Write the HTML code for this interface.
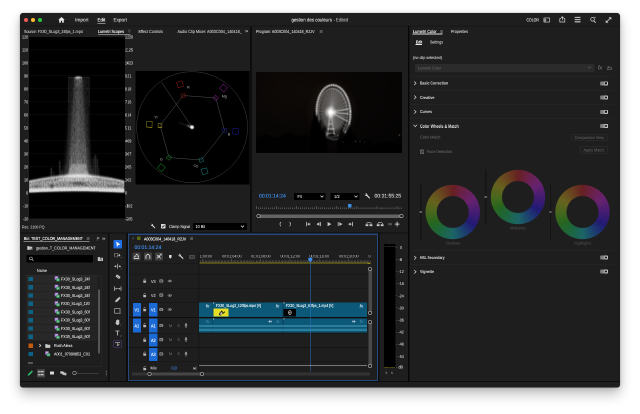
<!DOCTYPE html><html lang="en"><head><meta charset="utf-8"><title>gestion des couleurs - Edited</title><style>
html,body{margin:0;padding:0;background:#fff;}
body{width:640px;height:414px;position:relative;overflow:hidden;font-family:"Liberation Sans",sans-serif;}
div,span.t,svg{position:absolute;}
#stage{left:0;top:0;width:1280px;height:828px;transform:scale(.5);transform-origin:0 0;will-change:transform;background:#fff;overflow:hidden;}
.t{text-shadow:0 0 .5px currentColor;text-rendering:geometricPrecision;white-space:nowrap;line-height:1.15;transform-origin:0 50%;display:block;}
#win{left:40px;top:26px;width:1200px;height:749.4px;background:#1e1e1e;border-radius:6px;box-shadow:0 14px 26px rgba(0,0,0,.24),0 3px 12px rgba(0,0,0,.14),0 0 2px rgba(0,0,0,.4);overflow:hidden;}
</style></head><body><div id="stage">
<div id="win">
<div style="left:0px;top:25.2px;width:1200px;height:2px;background:#151515;"></div>
<div style="left:460.4px;top:27.0px;width:3.4px;height:414px;background:#0d0d0d;"></div>
<div style="left:775.8px;top:27.0px;width:2.8px;height:709.0px;background:#070707;"></div>
<div style="left:0px;top:438.8px;width:776px;height:2.4px;background:#0d0d0d;"></div>
<div style="left:176px;top:440px;width:2.8px;height:297.0px;background:#0d0d0d;"></div>
<div style="left:212.4px;top:440px;width:3.2px;height:297.0px;background:#0d0d0d;"></div>
<div style="left:716.4px;top:440px;width:2.6px;height:297.0px;background:#0d0d0d;"></div>
<div style="left:0px;top:736px;width:1200px;height:14px;background:#1e1e1e;"></div>
<div style="left:0px;top:736px;width:1200px;height:2px;background:#0c0c0c;"></div>
<div style="left:8.1px;top:9.5px;width:8.2px;height:8.2px;background:#ee5b54;border-radius:50%;"></div>
<div style="left:22.1px;top:9.5px;width:8.2px;height:8.2px;background:#fdbc2e;border-radius:50%;"></div>
<div style="left:36.1px;top:9.5px;width:8.2px;height:8.2px;background:#2bc640;border-radius:50%;"></div>
<svg style="left:75.6px;top:7.2px;" width="14" height="13.2" viewBox="0 0 7 6.6"><path d="M3.5 .5 L.3 3.4 H1.2 V6.1 H2.9 V4.2 H4.1 V6.1 H5.8 V3.4 H6.7 Z" fill="#e6e6e6"/></svg>
<span class="t" style="left:110.4px;top:8.66px;font-size:10.2px;color:#c9c9c9;transform:scaleX(0.942);">Import</span>
<span class="t" style="left:155.0px;top:8.66px;font-size:10.2px;color:#f0f0f0;transform:scaleX(0.888);">Edit</span>
<div style="left:155.0px;top:19.8px;width:15.6px;height:1.4px;background:#e8e8e8;"></div>
<span class="t" style="left:186.6px;top:8.66px;font-size:10.2px;color:#c9c9c9;transform:scaleX(0.910);">Export</span>
<span class="t" style="left:542.8px;top:8.66px;font-size:10.2px;color:#dadada;transform:scaleX(0.865);">gestion des couleurs</span>
<span class="t" style="left:627.2px;top:8.66px;font-size:10.2px;color:#a4a4a4;transform:scaleX(0.820);">- Edited</span>
<span class="t" style="left:1013.2px;top:9.42px;font-size:9.2px;color:#d6d6d6;transform:scaleX(0.759);">COLOR</span>
<svg style="left:1047.2px;top:9.2px;" width="13.6" height="10.4" viewBox="0 0 6.8 5.2"><rect x=".4" y=".4" width="5.8" height="4.2" rx=".3" fill="none" stroke="#cfcfcf" stroke-width=".65"/><rect x=".7" y="1.3" width="1.9" height="3" fill="#9a9a9a"/></svg>
<svg style="left:1077.6px;top:6.4px;" width="13.2" height="13.2" viewBox="0 0 6.6 6.6"><path d="M2 2.6 H.8 V6 H5.8 V2.6 H4.6" fill="none" stroke="#cfcfcf" stroke-width=".7"/><path d="M3.3 4.3 V.8 M2.1 1.9 L3.3 .6 L4.5 1.9" fill="none" stroke="#cfcfcf" stroke-width=".7"/></svg>
<svg style="left:1108.8px;top:7.2px;" width="12.8" height="12.4" viewBox="0 0 6.4 6.2"><path d="M.2 .9 H6 M.2 3.1 H6 M.2 5.3 H6" stroke="#cfcfcf" stroke-width="1.05"/></svg>
<svg style="left:1139.6px;top:7.2px;" width="12.8" height="13.6" viewBox="0 0 6.4 6.8"><circle cx="2.5" cy="2.8" r="1.8" fill="none" stroke="#cfcfcf" stroke-width=".7"/><path d="M3.8 4.2 L5.6 6.3" stroke="#cfcfcf" stroke-width=".85"/><path d="M5 .2 V1.6 M4.3 .9 H5.7" stroke="#cfcfcf" stroke-width=".45"/></svg>
<svg style="left:1169.6px;top:6.8px;" width="14" height="14" viewBox="0 0 7 7"><path d="M1.2 5.8 L5.8 1.2" stroke="#cfcfcf" stroke-width=".8"/><path d="M3.6 .7 H6.3 V3.4 Z M.7 3.6 V6.3 H3.4 Z" fill="#cfcfcf"/></svg>
<span class="t" style="left:8px;top:32.05px;font-size:8.8px;color:#bdbdbd;transform:scaleX(0.841);">Source: FX30_SLog3_24fps_1.mp4</span>
<span class="t" style="left:156px;top:32.05px;font-size:8.8px;color:#f2f2f2;transform:scaleX(0.851);">Lumetri Scopes</span>
<div style="left:155.6px;top:41.8px;width:65.6px;height:1.2px;background:#e0e0e0;"></div>
<svg style="left:215.4px;top:33.2px;" width="6.8" height="6" viewBox="0 0 3.4 3"><path d="M.2 .5H3M.2 1.5H3M.2 2.5H3" stroke="#6a6a6a" stroke-width=".45"/></svg>
<span class="t" style="left:237.4px;top:32.05px;font-size:8.8px;color:#bdbdbd;transform:scaleX(0.848);">Effect Controls</span>
<span class="t" style="left:315.4px;top:32.05px;font-size:8.8px;color:#bdbdbd;transform:scaleX(0.863);">Audio Clip Mixer: A003C004_140418_</span>
<span class="t" style="left:449.6px;top:31.17px;font-size:10px;color:#cfcfcf;transform:scaleX(1.151);">»</span>
<div style="left:18.4px;top:48.2px;width:191.2px;height:363.2px;background:#000;"></div>
<span class="t" style="left:3.6px;top:42.73px;font-size:9.0px;color:#bcbcbc;transform:scaleX(0.825);">120</span>
<span class="t" style="left:210.4px;top:42.73px;font-size:9.0px;color:#bcbcbc;transform:scaleX(0.799);">1228</span>
<span class="t" style="left:3.6px;top:68.73px;font-size:9.0px;color:#bcbcbc;transform:scaleX(0.864);">110</span>
<span class="t" style="left:210.4px;top:68.73px;font-size:9.0px;color:#bcbcbc;transform:scaleX(0.826);">1125</span>
<span class="t" style="left:3.6px;top:94.73px;font-size:9.0px;color:#bcbcbc;transform:scaleX(0.825);">100</span>
<span class="t" style="left:210.4px;top:94.73px;font-size:9.0px;color:#bcbcbc;transform:scaleX(0.799);">1023</span>
<span class="t" style="left:7.6px;top:120.73px;font-size:9.0px;color:#bcbcbc;transform:scaleX(0.839);">90</span>
<span class="t" style="left:210.4px;top:120.73px;font-size:9.0px;color:#bcbcbc;transform:scaleX(0.838);">921</span>
<span class="t" style="left:7.6px;top:146.73px;font-size:9.0px;color:#bcbcbc;transform:scaleX(0.839);">80</span>
<span class="t" style="left:210.4px;top:146.73px;font-size:9.0px;color:#bcbcbc;transform:scaleX(0.838);">818</span>
<span class="t" style="left:7.6px;top:172.73px;font-size:9.0px;color:#bcbcbc;transform:scaleX(0.839);">70</span>
<span class="t" style="left:210.4px;top:172.73px;font-size:9.0px;color:#bcbcbc;transform:scaleX(0.838);">716</span>
<span class="t" style="left:7.6px;top:198.73px;font-size:9.0px;color:#bcbcbc;transform:scaleX(0.839);">60</span>
<span class="t" style="left:210.4px;top:198.73px;font-size:9.0px;color:#bcbcbc;transform:scaleX(0.838);">614</span>
<span class="t" style="left:7.6px;top:224.73px;font-size:9.0px;color:#bcbcbc;transform:scaleX(0.839);">50</span>
<span class="t" style="left:210.4px;top:224.73px;font-size:9.0px;color:#bcbcbc;transform:scaleX(0.877);">511</span>
<span class="t" style="left:7.6px;top:250.73px;font-size:9.0px;color:#bcbcbc;transform:scaleX(0.839);">40</span>
<span class="t" style="left:210.4px;top:250.73px;font-size:9.0px;color:#bcbcbc;transform:scaleX(0.838);">409</span>
<span class="t" style="left:7.6px;top:276.73px;font-size:9.0px;color:#bcbcbc;transform:scaleX(0.839);">30</span>
<span class="t" style="left:210.4px;top:276.73px;font-size:9.0px;color:#bcbcbc;transform:scaleX(0.838);">307</span>
<span class="t" style="left:7.6px;top:302.73px;font-size:9.0px;color:#bcbcbc;transform:scaleX(0.839);">20</span>
<span class="t" style="left:210.4px;top:302.73px;font-size:9.0px;color:#bcbcbc;transform:scaleX(0.838);">205</span>
<span class="t" style="left:7.6px;top:328.73px;font-size:9.0px;color:#bcbcbc;transform:scaleX(0.839);">10</span>
<span class="t" style="left:210.4px;top:328.73px;font-size:9.0px;color:#bcbcbc;transform:scaleX(0.838);">102</span>
<span class="t" style="left:11.6px;top:354.73px;font-size:9.0px;color:#bcbcbc;transform:scaleX(0.877);">0</span>
<span class="t" style="left:210.4px;top:354.73px;font-size:9.0px;color:#bcbcbc;transform:scaleX(0.877);">0</span>
<span class="t" style="left:5.6px;top:380.73px;font-size:9.0px;color:#bcbcbc;transform:scaleX(0.799);">-10</span>
<span class="t" style="left:210.4px;top:380.73px;font-size:9.0px;color:#bcbcbc;transform:scaleX(0.822);">-102</span>
<span class="t" style="left:5.6px;top:406.73px;font-size:9.0px;color:#bcbcbc;transform:scaleX(0.799);">-20</span>
<span class="t" style="left:210.4px;top:406.73px;font-size:9.0px;color:#bcbcbc;transform:scaleX(0.822);">-205</span>
<svg style="left:18.4px;top:48.2px;" width="191.2" height="363.2" viewBox="0.2 1.1 95.6 181.6"><defs>
<filter id="b1" filterUnits="userSpaceOnUse" x="0" y="0" width="96" height="184"><feGaussianBlur stdDeviation="0.8"/></filter>
<filter id="b2" filterUnits="userSpaceOnUse" x="0" y="0" width="96" height="184"><feGaussianBlur stdDeviation="1.5 1"/></filter>
<filter id="b3" filterUnits="userSpaceOnUse" x="0" y="0" width="96" height="184"><feGaussianBlur stdDeviation="0.5 0.8"/></filter>
<filter id="nz" x="0" y="0" width="100%" height="100%"><feTurbulence type="fractalNoise" baseFrequency="1.1 0.25" numOctaves="2" seed="7" result="n"/><feColorMatrix in="n" type="matrix" values="0 0 0 0 1  0 0 0 0 1  0 0 0 0 1  1.2 0 0 0 0.1" result="a"/><feComposite in="SourceGraphic" in2="a" operator="in"/></filter>
<linearGradient id="pl" x1="0" y1="0" x2="0" y2="1"><stop offset="0" stop-color="#fff" stop-opacity=".12"/><stop offset=".5" stop-color="#fff" stop-opacity=".3"/><stop offset="1" stop-color="#fff" stop-opacity=".55"/></linearGradient>
<linearGradient id="pl2" x1="0" y1="0" x2="0" y2="1"><stop offset="0" stop-color="#fff" stop-opacity=".4"/><stop offset=".1" stop-color="#fff" stop-opacity=".13"/><stop offset=".6" stop-color="#fff" stop-opacity=".2"/><stop offset="1" stop-color="#fff" stop-opacity=".34"/></linearGradient>
<filter id="nz2" x="0" y="0" width="100%" height="100%"><feTurbulence type="fractalNoise" baseFrequency="0.9 0.35" numOctaves="2" seed="3" result="n"/><feColorMatrix in="n" type="matrix" values="0 0 0 0 1  0 0 0 0 1  0 0 0 0 1  1.4 0 0 0 -0.12" result="a"/><feComposite in="SourceGraphic" in2="a" operator="in"/></filter>
</defs><path d="M0 0.90H95.5" stroke="#141414" stroke-width=".4"/><path d="M0 13.90H95.5" stroke="#141414" stroke-width=".4"/><path d="M0 26.90H95.5" stroke="#141414" stroke-width=".4"/><path d="M0 39.90H95.5" stroke="#141414" stroke-width=".4"/><path d="M0 52.90H95.5" stroke="#141414" stroke-width=".4"/><path d="M0 65.90H95.5" stroke="#141414" stroke-width=".4"/><path d="M0 78.90H95.5" stroke="#141414" stroke-width=".4"/><path d="M0 91.90H95.5" stroke="#141414" stroke-width=".4"/><path d="M0 104.90H95.5" stroke="#141414" stroke-width=".4"/><path d="M0 117.90H95.5" stroke="#141414" stroke-width=".4"/><path d="M0 130.90H95.5" stroke="#141414" stroke-width=".4"/><path d="M0 143.90H95.5" stroke="#141414" stroke-width=".4"/><path d="M0 156.90H95.5" stroke="#141414" stroke-width=".4"/><path d="M0 169.90H95.5" stroke="#141414" stroke-width=".4"/><path d="M0 182.90H95.5" stroke="#141414" stroke-width=".4"/><g filter="url(#nz)"><path d="M39.6 41.5 H60.4 L61.5 120 L64 142 L35 142 L38.5 120 Z" fill="#fff" opacity=".1" filter="url(#b3)"/></g><path d="M42.5 42 L56.5 42 L59.5 100 L62 128 L66 142 L32 142 L36 128 L38.5 100 Z" fill="url(#pl)" filter="url(#b2)" opacity=".26"/><g filter="url(#nz)"><path d="M45.6 41 L53.6 41 L56.6 100 L59.4 142 L39.6 142 L42.4 100 Z" fill="url(#pl2)" filter="url(#b3)"/></g><path d="M45.2 50 L43.91 142" stroke="#fff" stroke-opacity="0.09" stroke-width=".7" filter="url(#b3)"/><path d="M47.3 42 L46.64 142" stroke="#fff" stroke-opacity="0.15" stroke-width=".7" filter="url(#b3)"/><path d="M48.8 41 L48.59 142" stroke="#fff" stroke-opacity="0.26" stroke-width=".7" filter="url(#b3)"/><path d="M50.2 41 L50.41 142" stroke="#fff" stroke-opacity="0.24" stroke-width=".7" filter="url(#b3)"/><path d="M51.8 43 L52.49 142" stroke="#fff" stroke-opacity="0.17" stroke-width=".7" filter="url(#b3)"/><path d="M53.6 48 L54.83 142" stroke="#fff" stroke-opacity="0.12" stroke-width=".7" filter="url(#b3)"/><path d="M55.6 60 L57.43 142" stroke="#fff" stroke-opacity="0.08" stroke-width=".7" filter="url(#b3)"/><path d="M43.2 70 L41.31 142" stroke="#fff" stroke-opacity="0.07" stroke-width=".7" filter="url(#b3)"/><path d="M57.6 80 L60.03 142" stroke="#fff" stroke-opacity="0.07" stroke-width=".7" filter="url(#b3)"/><path d="M39.7 41.3V66 M60.3 41.3V70" stroke="#fff" stroke-opacity=".14" stroke-width=".5"/><path d="M39.5 41.3 H60.5" stroke="#fff" stroke-opacity=".2" stroke-width=".6"/><ellipse cx="49.5" cy="41.5" rx="3.4" ry="1" fill="#fff" opacity=".6" filter="url(#b3)"/><path d="M22.5 132V142" stroke="#fff" stroke-opacity="0.3" stroke-width=".9" filter="url(#b3)"/><path d="M31 125V142" stroke="#fff" stroke-opacity="0.28" stroke-width=".9" filter="url(#b3)"/><path d="M33 134V142" stroke="#fff" stroke-opacity="0.18" stroke-width=".9" filter="url(#b3)"/><path d="M64.5 122V142" stroke="#fff" stroke-opacity="0.18" stroke-width=".9" filter="url(#b3)"/><path d="M66.5 119V142" stroke="#fff" stroke-opacity="0.3" stroke-width=".9" filter="url(#b3)"/><path d="M68.5 123V142" stroke="#fff" stroke-opacity="0.24" stroke-width=".9" filter="url(#b3)"/><path d="M70 132V142" stroke="#fff" stroke-opacity="0.14" stroke-width=".9" filter="url(#b3)"/><path d="M25 136V142" stroke="#fff" stroke-opacity="0.15" stroke-width=".9" filter="url(#b3)"/><path d="M0 144.5 C18 140.5 34 138 49 137.5 C64 138 80 140.5 95.5 144.5 L95.5 157 C70 156 60 155.6 49 155.6 C36 155.6 22 156 0 157 Z" fill="#fff" opacity=".36" filter="url(#b1)"/><g filter="url(#nz2)"><path d="M0 145.4 C18 141.6 34 139.6 49 139.2 C64 139.6 80 141.6 95.5 145.4 L95.5 156.6 C70 155.6 60 155.2 49 155.2 C36 155.2 22 155.6 0 156.6 Z" fill="#fff" opacity=".5"/></g><path d="M0 145.8 C18 142 34 140 49 139.6 C64 140 80 142 95.5 145.8" fill="none" stroke="#fff" stroke-width="1.3" opacity=".6" filter="url(#b3)"/><path d="M0 149.5 C18 146.5 34 145 49 144.8 C64 145 80 146.5 95.5 149.5" fill="none" stroke="#fff" stroke-width="1.2" opacity=".25" filter="url(#b3)"/><path d="M0 154.2 C22 153.2 36 152.8 49 152.8 C60 152.8 72 153.2 95.5 154.2" fill="none" stroke="#fff" stroke-width="3.4" opacity=".62" filter="url(#b3)"/><path d="M0 155.4 C22 154.5 36 154.2 49 154.2 C60 154.2 72 154.5 95.5 155.4" fill="none" stroke="#fff" stroke-width="1.3" opacity=".7" filter="url(#b3)"/><ellipse cx="23" cy="150.5" rx="1.6" ry="2.2" fill="#000" opacity=".45" filter="url(#b1)"/><ellipse cx="50" cy="147.5" rx="7" ry="1.6" fill="#000" opacity=".35" filter="url(#b1)"/><ellipse cx="8" cy="150" rx="4" ry="1.2" fill="#000" opacity=".25" filter="url(#b1)"/><ellipse cx="84" cy="150" rx="5" ry="1.2" fill="#000" opacity=".25" filter="url(#b1)"/><path d="M28 145 C37 141 40.5 138 42 128 L57 128 C58.5 138 62 141 71 145 Z" fill="#fff" opacity=".3" filter="url(#b1)"/></svg>
<span class="t" style="left:4px;top:423.98px;font-size:8.2px;color:#b0b0b0;transform:scaleX(0.875);">Rec. 2100 PQ</span>
<div style="left:231.0px;top:116px;width:228px;height:227.0px;background:#000;"></div>
<svg style="left:231.0px;top:116px;" width="228" height="227.0" viewBox="0 0 114 113.5"><circle cx="56.55000000000001" cy="56.2" r="55.5" fill="none" stroke="#404040" stroke-width=".5"/><polygon points="47.8,24.5 80.3,27.0 89.1,59.6 65.8,89.0 33.5,86.6 24.5,54.3" fill="none" stroke="#525252" stroke-width=".5"/><path d="M25.8 11.0 L56.55000000000001 56.2" stroke="#525252" stroke-width=".5"/><rect x="45.90" y="22.60" width="3.8" height="3.8" fill="none" stroke="#7a1414" stroke-width=".6" transform="rotate(-105.4 47.80 24.50)"/><rect x="41.70" y="10.50" width="5.6" height="5.6" fill="none" stroke="#7a1414" stroke-width=".6" transform="rotate(-105.7 44.50 13.30)"/><rect x="78.40" y="25.10" width="3.8" height="3.8" fill="none" stroke="#6c1474" stroke-width=".6" transform="rotate(-50.9 80.30 27.00)"/><rect x="85.30" y="14.20" width="5.6" height="5.6" fill="none" stroke="#6c1474" stroke-width=".6" transform="rotate(-51.2 88.10 17.00)"/><rect x="87.20" y="57.70" width="3.8" height="3.8" fill="none" stroke="#16167e" stroke-width=".6" transform="rotate(6.0 89.10 59.60)"/><rect x="97.30" y="57.50" width="5.6" height="5.6" fill="none" stroke="#16167e" stroke-width=".6" transform="rotate(5.4 100.10 60.30)"/><rect x="63.90" y="87.10" width="3.8" height="3.8" fill="none" stroke="#106a6a" stroke-width=".6" transform="rotate(74.3 65.80 89.00)"/><rect x="66.30" y="97.50" width="5.6" height="5.6" fill="none" stroke="#106a6a" stroke-width=".6" transform="rotate(74.1 69.10 100.30)"/><rect x="31.60" y="84.70" width="3.8" height="3.8" fill="none" stroke="#14701c" stroke-width=".6" transform="rotate(127.2 33.50 86.60)"/><rect x="23.00" y="93.80" width="5.6" height="5.6" fill="none" stroke="#14701c" stroke-width=".6" transform="rotate(127.3 25.80 96.60)"/><rect x="22.60" y="52.40" width="3.8" height="3.8" fill="none" stroke="#787214" stroke-width=".6" transform="rotate(-176.6 24.50 54.30)"/><rect x="11.00" y="50.50" width="5.6" height="5.6" fill="none" stroke="#787214" stroke-width=".6" transform="rotate(-176.1 13.80 53.30)"/><defs><filter id="vb" x="-100%" y="-100%" width="300%" height="300%"><feGaussianBlur stdDeviation=".7"/></filter><radialGradient id="vg"><stop offset="0" stop-color="#fff"/><stop offset=".5" stop-color="#fff" stop-opacity=".7"/><stop offset="1" stop-color="#fff" stop-opacity="0"/></radialGradient></defs><path d="M43.55000000000001 51.800000000000004 L55.55000000000001 55.800000000000004" stroke="#aaa" stroke-width="1" stroke-opacity=".2" filter="url(#vb)"/><path d="M51.55000000000001 54.400000000000006 L56.55000000000001 56.2" stroke="#fff" stroke-width="1.4" stroke-opacity=".45" filter="url(#vb)"/><circle cx="56.55000000000001" cy="56.2" r="2.6" fill="url(#vg)"/><circle cx="56.55000000000001" cy="56.2" r="1.1" fill="#fff" filter="url(#vb)"/><text x="52.8" y="17.7" font-size="3.7" text-anchor="middle" fill="#b4b4b4">R</text><text x="88.8" y="26.4" font-size="3.7" text-anchor="middle" fill="#b4b4b4">Mg</text><text x="93.5" y="64.4" font-size="3.7" text-anchor="middle" fill="#b4b4b4">B</text><text x="60.3" y="96.1" font-size="3.7" text-anchor="middle" fill="#b4b4b4">Cy</text><text x="25.8" y="89.4" font-size="3.7" text-anchor="middle" fill="#b4b4b4">G</text><text x="20.3" y="47.7" font-size="3.7" text-anchor="middle" fill="#b4b4b4">Yl</text></svg>
<svg style="left:261.2px;top:421.2px;" width="10.8" height="10.8" viewBox="0 0 5.4 5.4"><path d="M4.9 4.2 L2.6 1.9 A1.5 1.5 0 0 0 .8 .3 L1.7 1.2 L1.2 1.8 L.3 .9 A1.5 1.5 0 0 0 1.9 2.6 L4.2 4.9 Z" fill="#ddd"/></svg>
<div style="left:282.4px;top:422.4px;width:8.8px;height:8.8px;background:#d8d8d8;border-radius:.8px;"></div>
<svg style="left:282.4px;top:422.4px;" width="8.8" height="8.8" viewBox="0 0 4.4 4.4"><path d="M.9 2.2 L1.8 3.2 L3.5 1.1" fill="none" stroke="#222" stroke-width=".7"/></svg>
<span class="t" style="left:297.6px;top:422.96px;font-size:8.6px;color:#c4c4c4;transform:scaleX(0.830);">Clamp Signal</span>
<div style="left:346px;top:420px;width:108px;height:14.4px;background:#000;border-radius:1px;"></div>
<span class="t" style="left:351.2px;top:422.96px;font-size:8.6px;color:#d0d0d0;transform:scaleX(0.873);">10 Bit</span>
<svg style="left:441.2px;top:424.4px;" width="8" height="6" viewBox="0 0 4 3"><path d="M.5 .6 L2 2.2 L3.5 .6" fill="none" stroke="#e0e0e0" stroke-width=".75"/></svg>
<span class="t" style="left:471.6px;top:32.05px;font-size:8.8px;color:#c4c4c4;transform:scaleX(0.835);">Program: A003C004_140418_R2JV</span>
<svg style="left:599.2px;top:33.6px;" width="6.8" height="6" viewBox="0 0 3.4 3"><path d="M.2 .5H3M.2 1.5H3M.2 2.5H3" stroke="#999" stroke-width=".45"/></svg>
<svg style="left:472px;top:118px;" width="292" height="162" viewBox="0 0 146 81"><defs>
<radialGradient id="sky" cx=".3" cy=".25" r=".9"><stop offset="0" stop-color="#0e0a07"/><stop offset=".5" stop-color="#080605"/><stop offset="1" stop-color="#040303"/></radialGradient>
<filter id="f1" x="-30%" y="-30%" width="160%" height="160%"><feGaussianBlur stdDeviation=".45"/></filter>
<filter id="f2" x="-100%" y="-100%" width="300%" height="300%"><feGaussianBlur stdDeviation="1.3"/></filter>
<filter id="f3" x="-100%" y="-100%" width="300%" height="300%"><feGaussianBlur stdDeviation="3"/></filter>
<clipPath id="vc"><rect x="0" y="0" width="146" height="81"/></clipPath>
</defs>
<rect width="146" height="81" fill="url(#sky)"/>
<g clip-path="url(#vc)">
<g stroke="#1c140d" stroke-width=".5" fill="none" opacity=".8" filter="url(#f1)"><path d="M0 6 L18 14 L30 12 L44 22 M10 0 L22 12 L28 26 M30 0 L40 10 L58 14 L70 8 M50 0 L60 12 L64 24 M84 0 L92 10 L110 16 M100 0 L112 8 L130 10 L146 18 M120 24 L134 30 L146 28"/></g>
<ellipse cx="76" cy="39" rx="24" ry="30" fill="#6a5a48" opacity=".07" filter="url(#f3)"/>
<ellipse cx="77.5" cy="37.3" rx="13.8" ry="21.2" fill="#fff" opacity=".24" filter="url(#f2)"/><g filter="url(#f1)" transform="rotate(-3 77.5 40.3)"><ellipse cx="77.5" cy="40.3" rx="16.8" ry="27.2" fill="none" stroke="#fff" stroke-width="1.9" stroke-dasharray="1.7 .6" opacity=".95"/><ellipse cx="77.1" cy="40.599999999999994" rx="14.4" ry="24.2" fill="none" stroke="#fff" stroke-width="1" stroke-dasharray="1.1 .6" opacity=".7"/></g><g filter="url(#f1)"><path d="M74.4 40.2L91.7 41.6" stroke="#fff" stroke-width=".42" opacity="0.62"/><path d="M74.4 40.2L91.3 45.7" stroke="#fff" stroke-width=".42" opacity="0.62"/><path d="M74.4 40.2L90.6 49.7" stroke="#fff" stroke-width=".42" opacity="0.62"/><path d="M74.4 40.2L89.4 53.4" stroke="#fff" stroke-width=".42" opacity="0.62"/><path d="M74.4 40.2L87.9 56.7" stroke="#fff" stroke-width=".42" opacity="0.62"/><path d="M74.4 40.2L86.0 59.5" stroke="#fff" stroke-width=".42" opacity="0.62"/><path d="M74.4 40.2L83.9 61.7" stroke="#fff" stroke-width=".42" opacity="0.62"/><path d="M74.4 40.2L81.7 63.3" stroke="#fff" stroke-width=".42" opacity="0.62"/><path d="M74.4 40.2L79.2 64.1" stroke="#fff" stroke-width=".42" opacity="0.38"/><path d="M74.4 40.2L76.8 64.3" stroke="#fff" stroke-width=".42" opacity="0.38"/><path d="M74.4 40.2L74.3 63.7" stroke="#fff" stroke-width=".42" opacity="0.38"/><path d="M74.4 40.2L72.0 62.4" stroke="#fff" stroke-width=".42" opacity="0.38"/><path d="M74.4 40.2L69.8 60.4" stroke="#fff" stroke-width=".42" opacity="0.38"/><path d="M74.4 40.2L67.8 57.9" stroke="#fff" stroke-width=".42" opacity="0.38"/><path d="M74.4 40.2L66.2 54.7" stroke="#fff" stroke-width=".42" opacity="0.38"/><path d="M74.4 40.2L64.8 51.2" stroke="#fff" stroke-width=".42" opacity="0.38"/><path d="M74.4 40.2L63.9 47.3" stroke="#fff" stroke-width=".42" opacity="0.38"/><path d="M74.4 40.2L63.4 43.2" stroke="#fff" stroke-width=".42" opacity="0.38"/><path d="M74.4 40.2L63.3 39.0" stroke="#fff" stroke-width=".42" opacity="0.38"/><path d="M74.4 40.2L63.7 34.9" stroke="#fff" stroke-width=".42" opacity="0.38"/><path d="M74.4 40.2L64.4 30.9" stroke="#fff" stroke-width=".42" opacity="0.38"/><path d="M74.4 40.2L65.6 27.2" stroke="#fff" stroke-width=".42" opacity="0.38"/><path d="M74.4 40.2L67.1 23.9" stroke="#fff" stroke-width=".42" opacity="0.38"/><path d="M74.4 40.2L69.0 21.1" stroke="#fff" stroke-width=".42" opacity="0.38"/><path d="M74.4 40.2L71.1 18.9" stroke="#fff" stroke-width=".42" opacity="0.38"/><path d="M74.4 40.2L73.3 17.3" stroke="#fff" stroke-width=".42" opacity="0.38"/><path d="M74.4 40.2L75.8 16.5" stroke="#fff" stroke-width=".42" opacity="0.62"/><path d="M74.4 40.2L78.2 16.3" stroke="#fff" stroke-width=".42" opacity="0.62"/><path d="M74.4 40.2L80.7 16.9" stroke="#fff" stroke-width=".42" opacity="0.62"/><path d="M74.4 40.2L83.0 18.2" stroke="#fff" stroke-width=".42" opacity="0.62"/><path d="M74.4 40.2L85.2 20.2" stroke="#fff" stroke-width=".42" opacity="0.62"/><path d="M74.4 40.2L87.2 22.7" stroke="#fff" stroke-width=".42" opacity="0.62"/><path d="M74.4 40.2L88.8 25.9" stroke="#fff" stroke-width=".42" opacity="0.62"/><path d="M74.4 40.2L90.2 29.4" stroke="#fff" stroke-width=".42" opacity="0.62"/><path d="M74.4 40.2L91.1 33.3" stroke="#fff" stroke-width=".42" opacity="0.62"/><path d="M74.4 40.2L91.6 37.4" stroke="#fff" stroke-width=".42" opacity="0.62"/><path d="M74.4 40.2L93.1 36.7" stroke="#fff" stroke-width=".8" opacity=".7"/><path d="M74.4 40.2L93.3 42.1" stroke="#fff" stroke-width=".8" opacity=".7"/><path d="M74.4 40.2L92.3 49.3" stroke="#fff" stroke-width=".8" opacity=".7"/></g><g filter="url(#f1)" opacity=".85"><path d="M74.39999999999998 40.2 L70.99999999999997 66 M74.39999999999998 40.2 L79.19999999999997 66 M71.99999999999997 52 H77.39999999999998 M71.59999999999998 57 H78.19999999999997 M71.19999999999997 61.5 H78.99999999999997 M70.99999999999997 65 H79.39999999999998" stroke="#fff" stroke-width=".9" stroke-dasharray="1.3 .6"/></g><circle cx="74.39999999999998" cy="40.2" r="5" fill="#fff" opacity=".6" filter="url(#f2)"/><circle cx="74.39999999999998" cy="40.2" r="2.2" fill="#fff" filter="url(#f1)"/><g filter="url(#f1)"><path d="M52 81 L54 58 L57 46 L58.5 38 L60 45 L61.5 41 L63 52 L65 47 L66 58 L69 54 L70 66 L72 81 Z" fill="#050403" opacity=".93"/><path d="M80 81 L83 62 L86 56 L88 63 L92 58 L94 66 L99 62 L102 70 L110 66 L118 72 L130 69 L146 73 V81 Z" fill="#050403" opacity=".85"/><path d="M0 81 V66 L10 62 L20 66 L32 60 L42 64 L52 62 V81 Z" fill="#040303" opacity=".8"/></g><g filter="url(#f1)"><path d="M58.5 50 L60.5 44 L62 50 L63.5 47 L64.5 56 L66.5 53 L68 62 L62 64 L58 60 Z" fill="#050403" opacity=".8"/><path d="M90 58 L93 52 L95.5 57 L97 64 L91 66 Z" fill="#050403" opacity=".75"/></g><g filter="url(#f1)"><path d="M56 70 L58 60 L62 63 L66 58 L70 64 L76 61 L82 65 L88 60 L93 64 L97 59 L100 70 Z" fill="#050403" opacity=".72"/><path d="M57 58 L59 50 L61.5 55 L63 60 Z M92 60 L94.5 54 L96 61 Z" fill="#050403" opacity=".7"/></g><circle cx="99.5" cy="69.2" r=".55" fill="#ffe8c0" opacity="0.5" filter="url(#f1)"/><circle cx="104" cy="69.6" r=".55" fill="#ffe8c0" opacity="0.35" filter="url(#f1)"/><circle cx="143.4" cy="63.2" r=".55" fill="#ffe8c0" opacity="0.7" filter="url(#f1)"/><circle cx="87" cy="70" r=".55" fill="#ffe8c0" opacity="0.3" filter="url(#f1)"/><circle cx="108.5" cy="70" r=".55" fill="#ffe8c0" opacity="0.3" filter="url(#f1)"/></g></svg>
<span class="t" style="left:477.6px;top:361.34px;font-size:10.4px;color:#3d8be8;transform:scaleX(0.976);">00:01:14:24</span>
<div style="left:548px;top:360px;width:63.0px;height:13.8px;background:#000;border-radius:1px;"></div>
<span class="t" style="left:554.6px;top:362.56px;font-size:8.6px;color:#d0d0d0;transform:scaleX(0.922);">Fit</span>
<svg style="left:599.6px;top:364px;" width="8" height="6" viewBox="0 0 4 3"><path d="M.5 .6 L2 2.2 L3.5 .6" fill="none" stroke="#e0e0e0" stroke-width=".75"/></svg>
<div style="left:621.0px;top:360px;width:57.6px;height:13.8px;background:#000;border-radius:1px;"></div>
<span class="t" style="left:627.6px;top:362.56px;font-size:8.6px;color:#d0d0d0;transform:scaleX(0.937);">1/2</span>
<svg style="left:667.6px;top:364px;" width="8" height="6" viewBox="0 0 4 3"><path d="M.5 .6 L2 2.2 L3.5 .6" fill="none" stroke="#e0e0e0" stroke-width=".75"/></svg>
<svg style="left:689.2px;top:360.4px;" width="12.4" height="12.4" viewBox="0 0 5.4 5.4"><path d="M4.9 4.2 L2.6 1.9 A1.5 1.5 0 0 0 .8 .3 L1.7 1.2 L1.2 1.8 L.3 .9 A1.5 1.5 0 0 0 1.9 2.6 L4.2 4.9 Z" fill="#ddd"/></svg>
<span class="t" style="left:709.0px;top:361.34px;font-size:10.4px;color:#d6d6d6;transform:scaleX(0.969);">00:01:55:25</span>
<svg style="left:472.4px;top:385.6px;" width="292" height="6.8" viewBox="0 0 146 3.4"><path d="M0.40 0.20V3.2" stroke="#8a8a8a" stroke-width=".5"/><path d="M2.41 1.50V3.2" stroke="#8a8a8a" stroke-width=".5"/><path d="M4.42 1.50V3.2" stroke="#8a8a8a" stroke-width=".5"/><path d="M6.43 1.50V3.2" stroke="#8a8a8a" stroke-width=".5"/><path d="M8.44 1.50V3.2" stroke="#8a8a8a" stroke-width=".5"/><path d="M10.45 1.50V3.2" stroke="#8a8a8a" stroke-width=".5"/><path d="M12.46 1.50V3.2" stroke="#8a8a8a" stroke-width=".5"/><path d="M14.47 1.50V3.2" stroke="#8a8a8a" stroke-width=".5"/><path d="M16.48 1.50V3.2" stroke="#8a8a8a" stroke-width=".5"/><path d="M18.49 1.50V3.2" stroke="#8a8a8a" stroke-width=".5"/><path d="M20.50 0.20V3.2" stroke="#8a8a8a" stroke-width=".5"/><path d="M22.51 1.50V3.2" stroke="#8a8a8a" stroke-width=".5"/><path d="M24.52 1.50V3.2" stroke="#8a8a8a" stroke-width=".5"/><path d="M26.53 1.50V3.2" stroke="#8a8a8a" stroke-width=".5"/><path d="M28.54 1.50V3.2" stroke="#8a8a8a" stroke-width=".5"/><path d="M30.55 1.50V3.2" stroke="#8a8a8a" stroke-width=".5"/><path d="M32.56 1.50V3.2" stroke="#8a8a8a" stroke-width=".5"/><path d="M34.57 1.50V3.2" stroke="#8a8a8a" stroke-width=".5"/><path d="M36.58 1.50V3.2" stroke="#8a8a8a" stroke-width=".5"/><path d="M38.59 1.50V3.2" stroke="#8a8a8a" stroke-width=".5"/><path d="M40.60 0.20V3.2" stroke="#8a8a8a" stroke-width=".5"/><path d="M42.61 1.50V3.2" stroke="#8a8a8a" stroke-width=".5"/><path d="M44.62 1.50V3.2" stroke="#8a8a8a" stroke-width=".5"/><path d="M46.63 1.50V3.2" stroke="#8a8a8a" stroke-width=".5"/><path d="M48.64 1.50V3.2" stroke="#8a8a8a" stroke-width=".5"/><path d="M50.65 1.50V3.2" stroke="#8a8a8a" stroke-width=".5"/><path d="M52.66 1.50V3.2" stroke="#8a8a8a" stroke-width=".5"/><path d="M54.67 1.50V3.2" stroke="#8a8a8a" stroke-width=".5"/><path d="M56.68 1.50V3.2" stroke="#8a8a8a" stroke-width=".5"/><path d="M58.69 1.50V3.2" stroke="#8a8a8a" stroke-width=".5"/><path d="M60.70 0.20V3.2" stroke="#8a8a8a" stroke-width=".5"/><path d="M62.71 1.50V3.2" stroke="#8a8a8a" stroke-width=".5"/><path d="M64.72 1.50V3.2" stroke="#8a8a8a" stroke-width=".5"/><path d="M66.73 1.50V3.2" stroke="#8a8a8a" stroke-width=".5"/><path d="M68.74 1.50V3.2" stroke="#8a8a8a" stroke-width=".5"/><path d="M70.75 1.50V3.2" stroke="#8a8a8a" stroke-width=".5"/><path d="M72.76 1.50V3.2" stroke="#8a8a8a" stroke-width=".5"/><path d="M74.77 1.50V3.2" stroke="#8a8a8a" stroke-width=".5"/><path d="M76.78 1.50V3.2" stroke="#8a8a8a" stroke-width=".5"/><path d="M78.79 1.50V3.2" stroke="#8a8a8a" stroke-width=".5"/><path d="M80.80 0.20V3.2" stroke="#8a8a8a" stroke-width=".5"/><path d="M82.81 1.50V3.2" stroke="#8a8a8a" stroke-width=".5"/><path d="M84.82 1.50V3.2" stroke="#8a8a8a" stroke-width=".5"/><path d="M86.83 1.50V3.2" stroke="#8a8a8a" stroke-width=".5"/><path d="M88.84 1.50V3.2" stroke="#8a8a8a" stroke-width=".5"/><path d="M90.85 1.50V3.2" stroke="#8a8a8a" stroke-width=".5"/><path d="M92.86 1.50V3.2" stroke="#8a8a8a" stroke-width=".5"/><path d="M94.87 1.50V3.2" stroke="#8a8a8a" stroke-width=".5"/><path d="M96.88 1.50V3.2" stroke="#8a8a8a" stroke-width=".5"/><path d="M98.89 1.50V3.2" stroke="#8a8a8a" stroke-width=".5"/><path d="M100.90 0.20V3.2" stroke="#8a8a8a" stroke-width=".5"/><path d="M102.91 1.50V3.2" stroke="#8a8a8a" stroke-width=".5"/><path d="M104.92 1.50V3.2" stroke="#8a8a8a" stroke-width=".5"/><path d="M106.93 1.50V3.2" stroke="#8a8a8a" stroke-width=".5"/><path d="M108.94 1.50V3.2" stroke="#8a8a8a" stroke-width=".5"/><path d="M110.95 1.50V3.2" stroke="#8a8a8a" stroke-width=".5"/><path d="M112.96 1.50V3.2" stroke="#8a8a8a" stroke-width=".5"/><path d="M114.97 1.50V3.2" stroke="#8a8a8a" stroke-width=".5"/><path d="M116.98 1.50V3.2" stroke="#8a8a8a" stroke-width=".5"/><path d="M118.99 1.50V3.2" stroke="#8a8a8a" stroke-width=".5"/><path d="M121.00 0.20V3.2" stroke="#8a8a8a" stroke-width=".5"/><path d="M123.01 1.50V3.2" stroke="#8a8a8a" stroke-width=".5"/><path d="M125.02 1.50V3.2" stroke="#8a8a8a" stroke-width=".5"/><path d="M127.03 1.50V3.2" stroke="#8a8a8a" stroke-width=".5"/><path d="M129.04 1.50V3.2" stroke="#8a8a8a" stroke-width=".5"/><path d="M131.05 1.50V3.2" stroke="#8a8a8a" stroke-width=".5"/><path d="M133.06 1.50V3.2" stroke="#8a8a8a" stroke-width=".5"/><path d="M135.07 1.50V3.2" stroke="#8a8a8a" stroke-width=".5"/><path d="M137.08 1.50V3.2" stroke="#8a8a8a" stroke-width=".5"/><path d="M139.09 1.50V3.2" stroke="#8a8a8a" stroke-width=".5"/><path d="M141.10 0.20V3.2" stroke="#8a8a8a" stroke-width=".5"/><path d="M143.11 1.50V3.2" stroke="#8a8a8a" stroke-width=".5"/><path d="M145.12 1.50V3.2" stroke="#8a8a8a" stroke-width=".5"/></svg>
<div style="left:656px;top:382px;width:7.2px;height:6.8px;background:#3d8be8;border-radius:.5px .5px 1.2px 1.2px;"></div>
<div style="left:474.8px;top:402.8px;width:290px;height:6.8px;background:#646464;border-radius:1.7px;"></div>
<div style="left:472.6px;top:402.0px;width:8.4px;height:8.4px;background:#1c1c1c;border-radius:50%;border:1.5px solid #e8e8e8;box-sizing:border-box;"></div>
<div style="left:758.6px;top:402.0px;width:8.4px;height:8.4px;background:#1c1c1c;border-radius:50%;border:1.5px solid #e8e8e8;box-sizing:border-box;"></div>
<svg style="left:460px;top:417.2px;" width="304" height="10.4" viewBox="0 0 152 5.2"><path d="M31 .6 C30 .6 30.4 2.4 29.6 2.6 C30.4 2.8 30 4.6 31 4.6" fill="none" stroke="#c8c8c8" stroke-width="0.7"/><path d="M39.4 .6 C40.4 .6 40 2.4 40.8 2.6 C40 2.8 40.4 4.6 39.4 4.6" fill="none" stroke="#c8c8c8" stroke-width="0.7"/><path d="M56.4 .4V4.8" fill="none" stroke="#c8c8c8" stroke-width="0.8"/><path d="M60.6 2.6H58 M60.6 2.6" fill="none" stroke="#c8c8c8" stroke-width="0.7"/><path d="M57.2 2.6L59.4 1V4.2Z" fill="#c8c8c8" stroke="none" stroke-width="0.7"/><path d="M66.4 2.6L69.4 .8V4.4Z" fill="#c8c8c8" stroke="none" stroke-width="0.7"/><path d="M70.6 .6V4.6" fill="none" stroke="#c8c8c8" stroke-width="0.8"/><path d="M77.6 .5L81.4 2.6L77.6 4.7Z" fill="#c8c8c8" stroke="none" stroke-width="0.7"/><path d="M88.2 .6V4.6" fill="none" stroke="#c8c8c8" stroke-width="0.8"/><path d="M89.4 .8L92.4 2.6L89.4 4.4Z" fill="#c8c8c8" stroke="none" stroke-width="0.7"/><path d="M102.6 .4V4.8" fill="none" stroke="#c8c8c8" stroke-width="0.8"/><path d="M98.2 2.6H100.6" fill="none" stroke="#c8c8c8" stroke-width="0.7"/><path d="M101.8 2.6L99.6 1V4.2Z" fill="#c8c8c8" stroke="none" stroke-width="0.7"/><path d="M115.6 4.6H118.4V2.8H115.6Z M119.6 4.6H122.4V2.8H119.6Z" fill="#c8c8c8" stroke="none" stroke-width="0.7"/><path d="M116.6 2.4 C116.8 .6 121.2 .6 121.4 2.4" fill="none" stroke="#c8c8c8" stroke-width="0.7"/><path d="M126.8 4.6H129.6V2.8H126.8Z M130.8 4.6H133.6V2.8H130.8Z" fill="#c8c8c8" stroke="none" stroke-width="0.7"/><path d="M127.8 2.4 C128 .6 132.4 .6 132.6 2.4" fill="none" stroke="#c8c8c8" stroke-width="0.7"/><path d="M138.4 1.4L139.7 2.6L138.4 3.8 M140.4 1.4L141.7 2.6L140.4 3.8" fill="none" stroke="#9a9a9a" stroke-width=".55"/><path d="M147.2 .3V4.9 M144.9 2.6H149.5" fill="none" stroke="#c8c8c8" stroke-width="1"/></svg>
<span class="t" style="left:785.8px;top:32.05px;font-size:8.8px;color:#f2f2f2;transform:scaleX(0.894);">Lumetri Color</span>
<div style="left:785.4px;top:41.4px;width:60px;height:1.2px;background:#e0e0e0;"></div>
<svg style="left:839.6px;top:33.6px;" width="6.8" height="6" viewBox="0 0 3.4 3"><path d="M.2 .5H3M.2 1.5H3M.2 2.5H3" stroke="#999" stroke-width=".45"/></svg>
<span class="t" style="left:862px;top:32.05px;font-size:8.8px;color:#c4c4c4;transform:scaleX(0.848);">Properties</span>
<span class="t" style="left:791.6px;top:53.76px;font-size:8.6px;color:#f2f2f2;font-weight:600;transform:scaleX(0.764);">Edit</span>
<div style="left:791.2px;top:62.4px;width:13.2px;height:1.6px;background:#e6e6e6;"></div>
<span class="t" style="left:819.6px;top:53.76px;font-size:8.6px;color:#c4c4c4;transform:scaleX(0.837);">Settings</span>
<span class="t" style="left:785.8px;top:85.47px;font-size:8.4px;color:#c0c0c0;transform:scaleX(0.916);">(no clip selected)</span>
<div style="left:790px;top:102px;width:359.2px;height:15.8px;background:#2b2b2b;border-radius:1px;"></div>
<span class="t" style="left:796.4px;top:105.76px;font-size:8.6px;color:#585858;transform:scaleX(0.892);">Lumetri Color</span>
<svg style="left:1135.2px;top:106.4px;" width="8" height="6" viewBox="0 0 4 3"><path d="M.5 .6 L2 2.2 L3.5 .6" fill="none" stroke="#555" stroke-width=".75"/></svg>
<span class="t" style="left:1155.6px;top:103.27px;font-size:11.6px;color:#707070;font-style:italic;font-family:"Liberation Serif",serif;text-shadow:none;transform:scaleX(0.974);">fx</span>
<svg style="left:1173.2px;top:105.6px;" width="10.8" height="8.8" viewBox="0 0 5.4 4.4"><path d="M1.6 1.2 H4.2 A.6 .6 0 0 1 4.8 1.8 V3.2 A.6 .6 0 0 1 4.2 3.8 H1.4 A.6 .6 0 0 1 .8 3.2 V2.6" fill="none" stroke="#7c7c7c" stroke-width=".6"/><path d="M2.2 .2 L1 1.2 L2.2 2.2" fill="none" stroke="#7c7c7c" stroke-width=".6"/></svg>
<svg style="left:786.8px;top:136.0px;" width="6.8" height="9.2" viewBox="0 0 3.4 4.6"><path d="M.7 .5 L2.6 2.3 L.7 4.1" fill="none" stroke="#dcdcdc" stroke-width=".65"/></svg>
<span class="t" style="left:799.6px;top:136.36px;font-size:8.6px;color:#dedede;font-weight:700;text-shadow:none;transform:scaleX(0.820);">Basic Correction</span>
<div style="left:1160.4px;top:136.6px;width:16px;height:8px;background:linear-gradient(90deg,#6e6e6e 0%,#8a8a8a 45%,#c4c4c4 70%);border-radius:2px;"></div>
<div style="left:1169.8px;top:138.3px;width:4.6px;height:4.6px;background:#080808;border-radius:50%;"></div>
<svg style="left:786.8px;top:164.4px;" width="6.8" height="9.2" viewBox="0 0 3.4 4.6"><path d="M.7 .5 L2.6 2.3 L.7 4.1" fill="none" stroke="#dcdcdc" stroke-width=".65"/></svg>
<span class="t" style="left:799.6px;top:164.76px;font-size:8.6px;color:#dedede;font-weight:700;text-shadow:none;transform:scaleX(0.849);">Creative</span>
<div style="left:1160.4px;top:165.0px;width:16px;height:8px;background:linear-gradient(90deg,#6e6e6e 0%,#8a8a8a 45%,#c4c4c4 70%);border-radius:2px;"></div>
<div style="left:1169.8px;top:166.7px;width:4.6px;height:4.6px;background:#080808;border-radius:50%;"></div>
<svg style="left:786.8px;top:193.0px;" width="6.8" height="9.2" viewBox="0 0 3.4 4.6"><path d="M.7 .5 L2.6 2.3 L.7 4.1" fill="none" stroke="#dcdcdc" stroke-width=".65"/></svg>
<span class="t" style="left:799.6px;top:193.36px;font-size:8.6px;color:#dedede;font-weight:700;text-shadow:none;transform:scaleX(0.830);">Curves</span>
<div style="left:1160.4px;top:193.6px;width:16px;height:8px;background:linear-gradient(90deg,#6e6e6e 0%,#8a8a8a 45%,#c4c4c4 70%);border-radius:2px;"></div>
<div style="left:1169.8px;top:195.3px;width:4.6px;height:4.6px;background:#080808;border-radius:50%;"></div>
<svg style="left:786px;top:222.4px;" width="9.2" height="6.8" viewBox="0 0 4.6 3.4"><path d="M.5 .7 L2.3 2.6 L4.1 .7" fill="none" stroke="#dcdcdc" stroke-width=".65"/></svg>
<span class="t" style="left:799.6px;top:221.56px;font-size:8.6px;color:#dedede;font-weight:700;text-shadow:none;transform:scaleX(0.855);">Color Wheels &amp; Match</span>
<div style="left:1160.4px;top:221.8px;width:16px;height:8px;background:linear-gradient(90deg,#6e6e6e 0%,#8a8a8a 45%,#c4c4c4 70%);border-radius:2px;"></div>
<div style="left:1169.8px;top:223.5px;width:4.6px;height:4.6px;background:#080808;border-radius:50%;"></div>
<div style="left:780px;top:126px;width:408px;height:1.0px;background:#272727;"></div>
<div style="left:780px;top:154px;width:408px;height:1.0px;background:#272727;"></div>
<div style="left:780px;top:183.0px;width:408px;height:1.0px;background:#272727;"></div>
<div style="left:780px;top:211.2px;width:408px;height:1.0px;background:#272727;"></div>
<div style="left:780px;top:474.8px;width:408px;height:1.0px;background:#272727;"></div>
<div style="left:780px;top:503.2px;width:408px;height:1.0px;background:#272727;"></div>
<span class="t" style="left:799.6px;top:244.47px;font-size:8.4px;color:#5a5a5a;transform:scaleX(0.904);">Color Match</span>
<div style="left:1103.0px;top:241.6px;width:72.4px;height:14.4px;border:1.0px solid #303030;border-radius:1.2px;box-sizing:border-box;"></div>
<span class="t" style="left:1109.2px;top:244.78px;font-size:8.2px;color:#545454;transform:scaleX(0.919);">Comparison View</span>
<div style="left:1120.6px;top:266.4px;width:54.8px;height:15.2px;border:1.0px solid #303030;border-radius:1.2px;box-sizing:border-box;"></div>
<span class="t" style="left:1126.8px;top:269.98px;font-size:8.2px;color:#545454;transform:scaleX(0.923);">Apply Match</span>
<div style="left:799.6px;top:273.4px;width:8.4px;height:8.4px;background:#5e5e5e;border-radius:.7px;"></div>
<svg style="left:799.6px;top:273.4px;" width="8.4" height="8.4" viewBox="0 0 4.2 4.2"><path d="M.9 2.1 L1.7 3 L3.3 1.1" fill="none" stroke="#1e1e1e" stroke-width=".7"/></svg>
<span class="t" style="left:814px;top:273.47px;font-size:8.4px;color:#585858;transform:scaleX(0.888);">Face Detection</span>
<div style="left:810.4px;top:342.8px;width:110.4px;height:110.4px;background:conic-gradient(from 0deg,#672022 0deg,#69214b 28deg,#67226f 58deg,#421c71 92deg,#211a74 122deg,#1c4070 150deg,#1c6565 180deg,#1c663e 212deg,#27661e 242deg,#4b671d 272deg,#67621e 300deg,#68421f 332deg,#672022 360deg);border-radius:50%;-webkit-mask:radial-gradient(circle closest-side,transparent 31.2px,#000 32.8px,#000 53.8px,transparent 100%);mask:radial-gradient(circle closest-side,transparent 31.2px,#000 32.8px,#000 53.8px,transparent 100%);"></div>
<span class="t" style="left:850.8px;top:455.98px;font-size:8.2px;color:#424242;transform:scaleX(0.879);">Shadows</span>
<div style="left:800.0px;top:343.4px;width:2.8px;height:109.6px;background:#141414;"></div>
<div style="left:799.0px;top:396.2px;width:4.8px;height:3.6px;background:#606060;border-radius:.3px;"></div>
<div style="left:940.6px;top:312.8px;width:110.4px;height:110.4px;background:conic-gradient(from 0deg,#672022 0deg,#69214b 28deg,#67226f 58deg,#421c71 92deg,#211a74 122deg,#1c4070 150deg,#1c6565 180deg,#1c663e 212deg,#27661e 242deg,#4b671d 272deg,#67621e 300deg,#68421f 332deg,#672022 360deg);border-radius:50%;-webkit-mask:radial-gradient(circle closest-side,transparent 31.2px,#000 32.8px,#000 53.8px,transparent 100%);mask:radial-gradient(circle closest-side,transparent 31.2px,#000 32.8px,#000 53.8px,transparent 100%);"></div>
<span class="t" style="left:980.2px;top:425.98px;font-size:8.2px;color:#424242;transform:scaleX(0.939);">Midtones</span>
<div style="left:930.2px;top:313.4px;width:2.8px;height:109.6px;background:#141414;"></div>
<div style="left:929.2px;top:366.2px;width:4.8px;height:3.6px;background:#606060;border-radius:.3px;"></div>
<div style="left:1070.0px;top:342.8px;width:110.4px;height:110.4px;background:conic-gradient(from 0deg,#672022 0deg,#69214b 28deg,#67226f 58deg,#421c71 92deg,#211a74 122deg,#1c4070 150deg,#1c6565 180deg,#1c663e 212deg,#27661e 242deg,#4b671d 272deg,#67621e 300deg,#68421f 332deg,#672022 360deg);border-radius:50%;-webkit-mask:radial-gradient(circle closest-side,transparent 31.2px,#000 32.8px,#000 53.8px,transparent 100%);mask:radial-gradient(circle closest-side,transparent 31.2px,#000 32.8px,#000 53.8px,transparent 100%);"></div>
<span class="t" style="left:1107.8px;top:455.98px;font-size:8.2px;color:#424242;transform:scaleX(0.968);">Highlights</span>
<div style="left:1059.6px;top:343.4px;width:2.8px;height:109.6px;background:#141414;"></div>
<div style="left:1058.6px;top:396.2px;width:4.8px;height:3.6px;background:#606060;border-radius:.3px;"></div>
<svg style="left:786.8px;top:484.6px;" width="6.8" height="9.2" viewBox="0 0 3.4 4.6"><path d="M.7 .5 L2.6 2.3 L.7 4.1" fill="none" stroke="#dcdcdc" stroke-width=".65"/></svg>
<span class="t" style="left:799.6px;top:484.96px;font-size:8.6px;color:#dedede;font-weight:700;text-shadow:none;transform:scaleX(0.776);">HSL Secondary</span>
<div style="left:1160.4px;top:485.2px;width:16px;height:8px;background:linear-gradient(90deg,#6e6e6e 0%,#8a8a8a 45%,#c4c4c4 70%);border-radius:2px;"></div>
<div style="left:1169.8px;top:486.9px;width:4.6px;height:4.6px;background:#080808;border-radius:50%;"></div>
<svg style="left:786.8px;top:512.6px;" width="6.8" height="9.2" viewBox="0 0 3.4 4.6"><path d="M.7 .5 L2.6 2.3 L.7 4.1" fill="none" stroke="#dcdcdc" stroke-width=".65"/></svg>
<span class="t" style="left:799.6px;top:512.96px;font-size:8.6px;color:#dedede;font-weight:700;text-shadow:none;transform:scaleX(0.830);">Vignette</span>
<div style="left:1160.4px;top:513.2px;width:16px;height:8px;background:linear-gradient(90deg,#6e6e6e 0%,#8a8a8a 45%,#c4c4c4 70%);border-radius:2px;"></div>
<div style="left:1169.8px;top:514.9px;width:4.6px;height:4.6px;background:#080808;border-radius:50%;"></div>
<span class="t" style="left:7.6px;top:446.45px;font-size:8.8px;color:#f2f2f2;transform:scaleX(0.819);">Bin: TEST_COLOR_MANAGEMENT</span>
<div style="left:7.2px;top:457.2px;width:132px;height:1.2px;background:#e0e0e0;"></div>
<svg style="left:133.2px;top:448px;" width="6.8" height="6" viewBox="0 0 3.4 3"><path d="M.2 .5H3M.2 1.5H3M.2 2.5H3" stroke="#999" stroke-width=".45"/></svg>
<svg style="left:152.8px;top:446.8px;" width="7.2" height="8.8" viewBox="0 0 3.6 4.4"><path d="M.6 .4V4.2" stroke="#888" stroke-width=".5"/><path d="M.8 .6H3.2L2.4 1.6L3.2 2.6H.8Z" fill="#777"/></svg>
<span class="t" style="left:164px;top:445.57px;font-size:10px;color:#cfcfcf;transform:scaleX(1.222);">»</span>
<svg style="left:14.4px;top:465.2px;" width="11.2" height="9.6" viewBox="0 0 5.6 4.8"><path d="M.3 .6H2.2L2.8 1.3H5.3V4.4H.3Z" fill="#c8c8c8"/><path d="M2.6 3.6H4.6M4 3L4.7 3.6L4 4.2" stroke="#222" stroke-width=".45" fill="none"/></svg>
<span class="t" style="left:32px;top:465.96px;font-size:8.6px;color:#c8c8c8;transform:scaleX(0.855);">gestion..T_COLOR_MANAGEMENT</span>
<div style="left:12.8px;top:483.8px;width:133.6px;height:15.0px;background:#000;border-radius:1.4px;"></div>
<svg style="left:17.6px;top:486.8px;" width="10" height="10" viewBox="0 0 5 5"><circle cx="1.9" cy="1.9" r="1.4" fill="none" stroke="#bdbdbd" stroke-width=".6"/><path d="M2.9 2.9L4.4 4.4" stroke="#bdbdbd" stroke-width=".7"/></svg>
<svg style="left:154.8px;top:486.8px;" width="11.6" height="9.6" viewBox="0 0 5.8 4.8"><path d="M.3 .6H2.2L2.8 1.3H5.5V4.5H.3Z" fill="#c4c4c4"/><circle cx="3.4" cy="2.7" r=".8" fill="none" stroke="#222" stroke-width=".4"/><path d="M3.9 3.3L4.6 4" stroke="#222" stroke-width=".4"/></svg>
<span class="t" style="left:33.8px;top:511.36px;font-size:8.6px;color:#cfcfcf;transform:scaleX(0.872);">Name</span>
<div style="left:12.4px;top:524px;width:150.8px;height:1.0px;background:#2c2c2c;"></div>
<div style="left:12.8px;top:524.5px;width:128.4px;height:15.4px;background:#282828;"></div>
<div style="left:142px;top:524.5px;width:12.8px;height:15.4px;background:#242424;"></div>
<div style="left:17.4px;top:527.9px;width:8.6px;height:8.6px;background:#0b6488;border-radius:.6px;"></div>
<svg style="left:68.8px;top:526.4px;" width="10.8" height="11.2" viewBox="0 0 5.4 5.6"><rect x=".2" y=".2" width="3.6" height="3.6" rx=".5" fill="#a070d0"/><path d="M.9 1.1H3.1M.9 2H3.1" stroke="#e8daf6" stroke-width=".45"/><rect x="1.8" y="2.2" width="3.4" height="3.2" rx=".4" fill="#2f9a58"/><path d="M2.5 3.2V4.5M3.1 2.9V4.8M3.7 3.3V4.4M4.3 3V4.7" stroke="#bfe8cc" stroke-width=".35"/></svg>
<span class="t" style="left:81.8px;top:528.16px;font-size:8.6px;color:#d4d4d4;transform:scaleX(0.855);">FX30_SLog3_24f</span>
<div style="left:12.8px;top:540.94px;width:128.4px;height:15.4px;background:#282828;"></div>
<div style="left:142px;top:540.94px;width:12.8px;height:15.4px;background:#242424;"></div>
<div style="left:17.4px;top:544.34px;width:8.6px;height:8.6px;background:#0b6488;border-radius:.6px;"></div>
<svg style="left:68.8px;top:542.84px;" width="10.8" height="11.2" viewBox="0 0 5.4 5.6"><rect x=".2" y=".2" width="3.6" height="3.6" rx=".5" fill="#a070d0"/><path d="M.9 1.1H3.1M.9 2H3.1" stroke="#e8daf6" stroke-width=".45"/><rect x="1.8" y="2.2" width="3.4" height="3.2" rx=".4" fill="#2f9a58"/><path d="M2.5 3.2V4.5M3.1 2.9V4.8M3.7 3.3V4.4M4.3 3V4.7" stroke="#bfe8cc" stroke-width=".35"/></svg>
<span class="t" style="left:81.8px;top:544.6px;font-size:8.6px;color:#d4d4d4;transform:scaleX(0.855);">FX30_SLog3_24f</span>
<div style="left:12.8px;top:557.38px;width:128.4px;height:15.4px;background:#282828;"></div>
<div style="left:142px;top:557.38px;width:12.8px;height:15.4px;background:#242424;"></div>
<div style="left:17.4px;top:560.78px;width:8.6px;height:8.6px;background:#0b6488;border-radius:.6px;"></div>
<svg style="left:68.8px;top:559.28px;" width="10.8" height="11.2" viewBox="0 0 5.4 5.6"><rect x=".2" y=".2" width="3.6" height="3.6" rx=".5" fill="#a070d0"/><path d="M.9 1.1H3.1M.9 2H3.1" stroke="#e8daf6" stroke-width=".45"/><rect x="1.8" y="2.2" width="3.4" height="3.2" rx=".4" fill="#2f9a58"/><path d="M2.5 3.2V4.5M3.1 2.9V4.8M3.7 3.3V4.4M4.3 3V4.7" stroke="#bfe8cc" stroke-width=".35"/></svg>
<span class="t" style="left:81.8px;top:561.04px;font-size:8.6px;color:#d4d4d4;transform:scaleX(0.855);">FX30_SLog3_24f</span>
<div style="left:12.8px;top:573.82px;width:128.4px;height:15.4px;background:#282828;"></div>
<div style="left:142px;top:573.82px;width:12.8px;height:15.4px;background:#242424;"></div>
<div style="left:17.4px;top:577.22px;width:8.6px;height:8.6px;background:#0b6488;border-radius:.6px;"></div>
<svg style="left:68.8px;top:575.72px;" width="10.8" height="11.2" viewBox="0 0 5.4 5.6"><rect x=".2" y=".2" width="3.6" height="3.6" rx=".5" fill="#a070d0"/><path d="M.9 1.1H3.1M.9 2H3.1" stroke="#e8daf6" stroke-width=".45"/><rect x="1.8" y="2.2" width="3.4" height="3.2" rx=".4" fill="#2f9a58"/><path d="M2.5 3.2V4.5M3.1 2.9V4.8M3.7 3.3V4.4M4.3 3V4.7" stroke="#bfe8cc" stroke-width=".35"/></svg>
<span class="t" style="left:81.8px;top:577.48px;font-size:8.6px;color:#d4d4d4;transform:scaleX(0.825);">FX30_SLog3_120</span>
<div style="left:12.8px;top:590.26px;width:128.4px;height:15.4px;background:#282828;"></div>
<div style="left:142px;top:590.26px;width:12.8px;height:15.4px;background:#242424;"></div>
<div style="left:17.4px;top:593.66px;width:8.6px;height:8.6px;background:#0b6488;border-radius:.6px;"></div>
<svg style="left:68.8px;top:592.16px;" width="10.8" height="11.2" viewBox="0 0 5.4 5.6"><rect x=".2" y=".2" width="3.6" height="3.6" rx=".5" fill="#a070d0"/><path d="M.9 1.1H3.1M.9 2H3.1" stroke="#e8daf6" stroke-width=".45"/><rect x="1.8" y="2.2" width="3.4" height="3.2" rx=".4" fill="#2f9a58"/><path d="M2.5 3.2V4.5M3.1 2.9V4.8M3.7 3.3V4.4M4.3 3V4.7" stroke="#bfe8cc" stroke-width=".35"/></svg>
<span class="t" style="left:81.8px;top:593.92px;font-size:8.6px;color:#d4d4d4;transform:scaleX(0.855);">FX30_SLog3_60f</span>
<div style="left:12.8px;top:606.7px;width:128.4px;height:15.4px;background:#282828;"></div>
<div style="left:142px;top:606.7px;width:12.8px;height:15.4px;background:#242424;"></div>
<div style="left:17.4px;top:610.1px;width:8.6px;height:8.6px;background:#0b6488;border-radius:.6px;"></div>
<svg style="left:68.8px;top:608.6px;" width="10.8" height="11.2" viewBox="0 0 5.4 5.6"><rect x=".2" y=".2" width="3.6" height="3.6" rx=".5" fill="#a070d0"/><path d="M.9 1.1H3.1M.9 2H3.1" stroke="#e8daf6" stroke-width=".45"/><rect x="1.8" y="2.2" width="3.4" height="3.2" rx=".4" fill="#2f9a58"/><path d="M2.5 3.2V4.5M3.1 2.9V4.8M3.7 3.3V4.4M4.3 3V4.7" stroke="#bfe8cc" stroke-width=".35"/></svg>
<span class="t" style="left:81.8px;top:610.36px;font-size:8.6px;color:#d4d4d4;transform:scaleX(0.855);">FX30_SLog3_60f</span>
<div style="left:12.8px;top:623.14px;width:128.4px;height:15.4px;background:#282828;"></div>
<div style="left:142px;top:623.14px;width:12.8px;height:15.4px;background:#242424;"></div>
<div style="left:17.4px;top:626.54px;width:8.6px;height:8.6px;background:#0b6488;border-radius:.6px;"></div>
<svg style="left:68.8px;top:625.04px;" width="10.8" height="11.2" viewBox="0 0 5.4 5.6"><rect x=".2" y=".2" width="3.6" height="3.6" rx=".5" fill="#a070d0"/><path d="M.9 1.1H3.1M.9 2H3.1" stroke="#e8daf6" stroke-width=".45"/><rect x="1.8" y="2.2" width="3.4" height="3.2" rx=".4" fill="#2f9a58"/><path d="M2.5 3.2V4.5M3.1 2.9V4.8M3.7 3.3V4.4M4.3 3V4.7" stroke="#bfe8cc" stroke-width=".35"/></svg>
<span class="t" style="left:81.8px;top:626.8px;font-size:8.6px;color:#d4d4d4;transform:scaleX(0.855);">FX30_SLog3_60f</span>
<div style="left:12.8px;top:639.58px;width:128.4px;height:15.4px;background:#282828;"></div>
<div style="left:142px;top:639.58px;width:12.8px;height:15.4px;background:#242424;"></div>
<div style="left:17.4px;top:642.98px;width:8.6px;height:8.6px;background:#0b6488;border-radius:.6px;"></div>
<svg style="left:68.8px;top:641.48px;" width="10.8" height="11.2" viewBox="0 0 5.4 5.6"><rect x=".2" y=".2" width="3.6" height="3.6" rx=".5" fill="#a070d0"/><path d="M.9 1.1H3.1M.9 2H3.1" stroke="#e8daf6" stroke-width=".45"/><rect x="1.8" y="2.2" width="3.4" height="3.2" rx=".4" fill="#2f9a58"/><path d="M2.5 3.2V4.5M3.1 2.9V4.8M3.7 3.3V4.4M4.3 3V4.7" stroke="#bfe8cc" stroke-width=".35"/></svg>
<span class="t" style="left:81.8px;top:643.24px;font-size:8.6px;color:#d4d4d4;transform:scaleX(0.855);">FX30_SLog3_60f</span>
<div style="left:17.4px;top:661.1px;width:8.6px;height:8.6px;background:#c25a10;border-radius:.6px;"></div>
<svg style="left:36.8px;top:661.4px;" width="6.4" height="8" viewBox="0 0 3.2 4"><path d="M.8 .6 L2.3 2 L.8 3.4" fill="none" stroke="#d8d8d8" stroke-width=".8"/></svg>
<svg style="left:50px;top:660.6px;" width="11.2" height="9.6" viewBox="0 0 5.6 4.8"><path d="M.3 .6H2.2L2.8 1.3H5.3V4.4H.3Z" fill="#c8c8c8"/></svg>
<span class="t" style="left:67.8px;top:661.36px;font-size:8.6px;color:#d4d4d4;transform:scaleX(0.846);">Rush Alexa</span>
<div style="left:17.4px;top:677.7px;width:8.6px;height:8.6px;background:#0b6488;border-radius:.6px;"></div>
<svg style="left:50.4px;top:676.2px;" width="10.8" height="11.2" viewBox="0 0 5.4 5.6"><rect x=".2" y=".2" width="3.6" height="3.6" rx=".5" fill="#a070d0"/><path d="M.9 1.1H3.1M.9 2H3.1" stroke="#e8daf6" stroke-width=".45"/><rect x="1.8" y="2.2" width="3.4" height="3.2" rx=".4" fill="#2f9a58"/><path d="M2.5 3.2V4.5M3.1 2.9V4.8M3.7 3.3V4.4M4.3 3V4.7" stroke="#bfe8cc" stroke-width=".35"/></svg>
<span class="t" style="left:67.8px;top:677.96px;font-size:8.6px;color:#d4d4d4;transform:scaleX(0.861);">A001_07090853_C01</span>
<div style="left:155.6px;top:552.8px;width:4px;height:128px;background:#565656;border-radius:1px;"></div>
<div style="left:162.8px;top:524px;width:1.0px;height:182px;background:#2a2a2a;"></div>
<div style="left:15.6px;top:698.4px;width:10.8px;height:4px;background:#565656;border-radius:1px;"></div>
<div style="left:12.4px;top:706px;width:150.8px;height:1.0px;background:#2c2c2c;"></div>
<svg style="left:13.6px;top:713.6px;" width="12" height="12.8" viewBox="0 0 6 6.4"><path d="M.6 5.8L1 4.2L4.2 1L5.4 2.2L2.2 5.4Z" fill="#2fb86a"/><path d="M4.5 .7L5.7 1.9" stroke="#2fb86a" stroke-width=".8"/></svg>
<div style="left:34px;top:712.4px;width:16.4px;height:16.4px;background:#454545;border-radius:1px;"></div>
<svg style="left:36.4px;top:715.2px;" width="12" height="10.8" viewBox="0 0 6 5.4"><path d="M.4 1.2H1.6M.4 4.2H1.6" stroke="#f0f0f0" stroke-width="1.3"/><path d="M2.4 1.2H5.6M2.4 4.2H5.6" stroke="#f0f0f0" stroke-width="1"/></svg>
<div style="left:60.4px;top:716.8px;width:7.2px;height:6.4px;background:#d8d8d8;border-radius:.4px;"></div>
<svg style="left:80px;top:715.6px;" width="14" height="9.2" viewBox="0 0 7 4.6"><rect x=".3" y=".4" width="3.6" height="2.4" fill="#d0d0d0" transform="rotate(12 2 1.6)"/><rect x="2.6" y="1.6" width="3.8" height="2.6" fill="#bcbcbc" transform="rotate(12 4.5 2.9)"/></svg>
<div style="left:112px;top:719.6px;width:45.6px;height:1.0px;background:#555;"></div>
<div style="left:105.2px;top:716.2px;width:7.6px;height:7.6px;background:#1c1c1c;border-radius:50%;border:1.2px solid #e0e0e0;box-sizing:border-box;"></div>
<svg style="left:170.8px;top:715.2px;" width="3.2" height="10" viewBox="0 0 1.6 5"><path d="M.8 .4V1.2M.8 2.1V2.9M.8 3.8V4.6" stroke="#9a9a9a" stroke-width=".8"/></svg>
<div style="left:186.6px;top:453.6px;width:17.6px;height:17.2px;background:#1f6fe8;border-radius:1.2px;"></div>
<svg style="left:186.6px;top:453.6px;" width="17.6" height="17.2" viewBox="0 0 8.8 8.6"><path d="M2.7 1.5L7 4.6L4.8 5L3.5 7Z" fill="#fff"/></svg>
<svg style="left:188px;top:479.2px;" width="16" height="12" viewBox="0 0 8 6"><rect x=".6" y=".8" width="3" height="3.6" fill="none" stroke="#c4c4c4" stroke-width=".55" stroke-dasharray=".8 .5"/><path d="M3.2 2.6H6M5 1.4L6.4 2.6L5 3.8Z" stroke="#c4c4c4" stroke-width=".5" fill="#c4c4c4"/><path d="M6.6 5.2L7.4 5.2L7.4 4.4Z" fill="#c4c4c4"/></svg>
<svg style="left:188px;top:500.8px;" width="16" height="12" viewBox="0 0 8 6"><path d="M3.6 .3V5.3" stroke="#c4c4c4" stroke-width=".7"/><path d="M2.8 2.8L1 1.6V4Z M4.4 2.8L6.2 1.6V4Z" fill="#c4c4c4"/><path d="M.2 2.8H1.2M6 2.8H7" stroke="#c4c4c4" stroke-width=".6"/><path d="M6.6 5.6L7.4 5.6L7.4 4.8Z" fill="#c4c4c4"/></svg>
<svg style="left:188.8px;top:522.4px;" width="14" height="12" viewBox="0 0 7 6"><rect x="1.2" y="1.4" width="4.6" height="2.6" rx=".5" fill="#c4c4c4" transform="rotate(38 3.5 2.8)"/><path d="M2.4 1.6L4.8 4.4" stroke="#1e1e1e" stroke-width=".35"/></svg>
<svg style="left:187.6px;top:545.6px;" width="16" height="10.8" viewBox="0 0 8 5.4"><path d="M.6 .4V5M7 .4V5" stroke="#c4c4c4" stroke-width=".7"/><path d="M1.4 2.7H6.2" stroke="#c4c4c4" stroke-width=".55"/><path d="M1 2.7L2.4 1.7V3.7Z M6.6 2.7L5.2 1.7V3.7Z" fill="#c4c4c4"/></svg>
<svg style="left:189.2px;top:566.8px;" width="12.8" height="12.8" viewBox="0 0 6.4 6.4"><path d="M.6 5.8L1.2 3.6L4 1L5.4 2.4L2.8 5.2Z" fill="#c4c4c4"/><path d="M4.4 .6L5.8 2" stroke="#c4c4c4" stroke-width=".9"/></svg>
<svg style="left:188.4px;top:590px;" width="14.8" height="13.2" viewBox="0 0 7.4 6.6"><rect x=".6" y=".6" width="5.4" height="4.6" fill="none" stroke="#c4c4c4" stroke-width=".6"/><path d="M6.4 6L7.2 6L7.2 5.2Z" fill="#c4c4c4"/></svg>
<svg style="left:188.8px;top:611.6px;" width="14" height="13.6" viewBox="0 0 7 6.8"><path d="M1.6 3.4V1.6C1.6 1 2.4 1 2.4 1.6V1C2.4 .4 3.2 .4 3.2 1V.9C3.2 .3 4 .3 4 .9V1.4C4 .9 4.8 .9 4.8 1.5V4.2C4.8 5.4 4.2 6 3.2 6C2.2 6 1.8 5.4 1 4.2C.6 3.6 1.2 3.2 1.6 3.6Z" fill="#c4c4c4"/><path d="M5.8 6.2L6.6 6.2L6.6 5.4Z" fill="#c4c4c4"/></svg>
<span class="t" style="left:190.4px;top:632.32px;font-size:14px;color:#c4c4c4;font-family:"Liberation Serif",serif;transform:scaleX(0.981);">T</span>
<svg style="left:200px;top:644px;" width="2.8" height="2.8" viewBox="0 0 1.4 1.4"><path d="M.2 1.2L1.2 1.2L1.2 .2Z" fill="#c4c4c4"/></svg>
<div style="left:187.2px;top:653.6px;width:16px;height:16px;border:1.1px solid #5a3c8c;border-radius:1.2px;box-sizing:border-box;"></div>
<svg style="left:190px;top:656.8px;" width="10.8" height="10" viewBox="0 0 5.4 5"><path d="M.4 .9H4.8M.4 .9V1.6M4.8 .9V1.6M2.6 .9V4.2M1.9 4.2H3.3" stroke="#c4c4c4" stroke-width=".6" fill="none"/><path d="M3.8 2.4V3.8M3.1 3.1H4.5" stroke="#c4c4c4" stroke-width=".45"/></svg>
<div style="left:215.0px;top:441.0px;width:501.4px;height:295.0px;border:3.0px solid #27497e;border-bottom-width:2px;border-right-width:2px;box-sizing:border-box;"></div>
<span class="t" style="left:223.6px;top:447.97px;font-size:6.8px;color:#808080;transform:scaleX(0.954);">×</span>
<div style="left:233.8px;top:446.8px;width:7.4px;height:7.6px;background:#5e6a12;border-radius:.4px;"></div>
<span class="t" style="left:248px;top:447.05px;font-size:8.8px;color:#f0f0f0;transform:scaleX(0.826);">A003C004_140418_R2JV</span>
<svg style="left:340.4px;top:448.4px;" width="6.8" height="6" viewBox="0 0 3.4 3"><path d="M.2 .5H3M.2 1.5H3M.2 2.5H3" stroke="#999" stroke-width=".45"/></svg>
<span class="t" style="left:228.8px;top:464.14px;font-size:10.4px;color:#3d8be8;transform:scaleX(0.976);">00:01:14:24</span>
<div style="left:224.8px;top:478.8px;width:16.6px;height:16.4px;background:#3e3e3e;border-radius:1.2px;"></div>
<div style="left:247.8px;top:478.8px;width:16.6px;height:16.4px;background:#3e3e3e;border-radius:1.2px;"></div>
<div style="left:269.8px;top:478.8px;width:16.6px;height:16.4px;background:#3e3e3e;border-radius:1.2px;"></div>
<svg style="left:225.4px;top:479.2px;" width="15.4" height="15.6" viewBox="0 0 7.7 7.8"><path d="M1.6 5.8V4.4L2.6 3.4L3.4 4.2V2.2L4.4 1.4L5.4 2.4V4L6.2 3.4V5.8Z" fill="none" stroke="#cdcdcd" stroke-width=".6"/><path d="M1.2 6.2H6.6" stroke="#cdcdcd" stroke-width=".6"/></svg>
<svg style="left:248.4px;top:479.2px;" width="15.4" height="15.6" viewBox="0 0 7.7 7.8"><path d="M1.9 6V3.8A1.95 1.95 0 0 1 5.8 3.8V6" fill="none" stroke="#cdcdcd" stroke-width="1"/><path d="M1.4 6H2.4M5.3 6H6.3" stroke="#cdcdcd" stroke-width=".6"/></svg>
<svg style="left:270.4px;top:479.2px;" width="15.4" height="15.6" viewBox="0 0 7.7 7.8"><path d="M1.6 2L6 6M6 2L1.6 6" stroke="#cdcdcd" stroke-width=".7"/><rect x="2.7" y="2.9" width="2.3" height="2.2" fill="#cdcdcd"/><path d="M4.6 1.2L6.6 1.2L6.6 3.2Z" fill="#cdcdcd"/></svg>
<svg style="left:296.8px;top:482.8px;" width="7.2" height="9.2" viewBox="0 0 3.6 4.6"><path d="M.5 .4H3.1V2.8L1.8 4.2L.5 2.8Z" fill="#d8d8d8"/></svg>
<svg style="left:316.4px;top:481.2px;" width="12.4" height="12.4" viewBox="0 0 5.4 5.4"><path d="M4.9 4.2 L2.6 1.9 A1.5 1.5 0 0 0 .8 .3 L1.7 1.2 L1.2 1.8 L.3 .9 A1.5 1.5 0 0 0 1.9 2.6 L4.2 4.9 Z" fill="#d4d4d4"/></svg>
<svg style="left:338.4px;top:483.6px;" width="12" height="8" viewBox="0 0 6 4"><rect x=".3" y=".3" width="5.4" height="3.2" rx=".6" fill="none" stroke="#7a7a7a" stroke-width=".5"/><path d="M2.5 1.4A.7 .7 0 1 0 2.5 2.4M4.5 1.4A.7 .7 0 1 0 4.5 2.4" fill="none" stroke="#7a7a7a" stroke-width=".4"/></svg>
<div style="left:358.4px;top:478px;width:342.8px;height:24px;overflow:hidden;">
<span class="t" style="left:-13.4px;top:4.16px;font-size:8.6px;color:#c8c8c8;text-shadow:none;transform:scaleX(0.863);">00:01:00:00</span>
<span class="t" style="left:45.2px;top:4.16px;font-size:8.6px;color:#c8c8c8;text-shadow:none;transform:scaleX(0.863);">00:01:04:00</span>
<span class="t" style="left:103.8px;top:4.16px;font-size:8.6px;color:#c8c8c8;text-shadow:none;transform:scaleX(0.863);">00:01:08:00</span>
<span class="t" style="left:162.4px;top:4.16px;font-size:8.6px;color:#c8c8c8;text-shadow:none;transform:scaleX(0.863);">00:01:12:00</span>
<span class="t" style="left:221.0px;top:4.16px;font-size:8.6px;color:#c8c8c8;text-shadow:none;transform:scaleX(0.863);">00:01:16:00</span>
<span class="t" style="left:279.6px;top:4.16px;font-size:8.6px;color:#c8c8c8;text-shadow:none;transform:scaleX(0.863);">00:01:20:00</span>
<span class="t" style="left:338.2px;top:4.16px;font-size:8.6px;color:#c8c8c8;text-shadow:none;transform:scaleX(0.863);">00:01:24:00</span>
<svg style="left:0;top:13.4px" width="342.8" height="7.2" viewBox="0 0 171.4 3.6"><path d="M0.17 1.90V3.6" stroke="#808080" stroke-width=".4"/><path d="M1.64 1.90V3.6" stroke="#808080" stroke-width=".4"/><path d="M3.10 0.20V3.6" stroke="#808080" stroke-width=".4"/><path d="M4.57 1.90V3.6" stroke="#808080" stroke-width=".4"/><path d="M6.03 1.90V3.6" stroke="#808080" stroke-width=".4"/><path d="M7.50 1.90V3.6" stroke="#808080" stroke-width=".4"/><path d="M8.96 1.90V3.6" stroke="#808080" stroke-width=".4"/><path d="M10.43 1.90V3.6" stroke="#808080" stroke-width=".4"/><path d="M11.89 1.90V3.6" stroke="#808080" stroke-width=".4"/><path d="M13.36 1.90V3.6" stroke="#808080" stroke-width=".4"/><path d="M14.82 1.90V3.6" stroke="#808080" stroke-width=".4"/><path d="M16.29 1.90V3.6" stroke="#808080" stroke-width=".4"/><path d="M17.75 1.90V3.6" stroke="#808080" stroke-width=".4"/><path d="M19.22 1.90V3.6" stroke="#808080" stroke-width=".4"/><path d="M20.68 1.90V3.6" stroke="#808080" stroke-width=".4"/><path d="M22.15 1.90V3.6" stroke="#808080" stroke-width=".4"/><path d="M23.61 1.90V3.6" stroke="#808080" stroke-width=".4"/><path d="M25.08 1.90V3.6" stroke="#808080" stroke-width=".4"/><path d="M26.54 1.90V3.6" stroke="#808080" stroke-width=".4"/><path d="M28.01 1.90V3.6" stroke="#808080" stroke-width=".4"/><path d="M29.47 1.90V3.6" stroke="#808080" stroke-width=".4"/><path d="M30.94 1.90V3.6" stroke="#808080" stroke-width=".4"/><path d="M32.40 0.20V3.6" stroke="#808080" stroke-width=".4"/><path d="M33.87 1.90V3.6" stroke="#808080" stroke-width=".4"/><path d="M35.33 1.90V3.6" stroke="#808080" stroke-width=".4"/><path d="M36.80 1.90V3.6" stroke="#808080" stroke-width=".4"/><path d="M38.26 1.90V3.6" stroke="#808080" stroke-width=".4"/><path d="M39.73 1.90V3.6" stroke="#808080" stroke-width=".4"/><path d="M41.19 1.90V3.6" stroke="#808080" stroke-width=".4"/><path d="M42.66 1.90V3.6" stroke="#808080" stroke-width=".4"/><path d="M44.12 1.90V3.6" stroke="#808080" stroke-width=".4"/><path d="M45.59 1.90V3.6" stroke="#808080" stroke-width=".4"/><path d="M47.05 1.90V3.6" stroke="#808080" stroke-width=".4"/><path d="M48.52 1.90V3.6" stroke="#808080" stroke-width=".4"/><path d="M49.98 1.90V3.6" stroke="#808080" stroke-width=".4"/><path d="M51.45 1.90V3.6" stroke="#808080" stroke-width=".4"/><path d="M52.91 1.90V3.6" stroke="#808080" stroke-width=".4"/><path d="M54.38 1.90V3.6" stroke="#808080" stroke-width=".4"/><path d="M55.84 1.90V3.6" stroke="#808080" stroke-width=".4"/><path d="M57.31 1.90V3.6" stroke="#808080" stroke-width=".4"/><path d="M58.77 1.90V3.6" stroke="#808080" stroke-width=".4"/><path d="M60.24 1.90V3.6" stroke="#808080" stroke-width=".4"/><path d="M61.70 0.20V3.6" stroke="#808080" stroke-width=".4"/><path d="M63.17 1.90V3.6" stroke="#808080" stroke-width=".4"/><path d="M64.63 1.90V3.6" stroke="#808080" stroke-width=".4"/><path d="M66.10 1.90V3.6" stroke="#808080" stroke-width=".4"/><path d="M67.56 1.90V3.6" stroke="#808080" stroke-width=".4"/><path d="M69.03 1.90V3.6" stroke="#808080" stroke-width=".4"/><path d="M70.49 1.90V3.6" stroke="#808080" stroke-width=".4"/><path d="M71.96 1.90V3.6" stroke="#808080" stroke-width=".4"/><path d="M73.42 1.90V3.6" stroke="#808080" stroke-width=".4"/><path d="M74.89 1.90V3.6" stroke="#808080" stroke-width=".4"/><path d="M76.35 1.90V3.6" stroke="#808080" stroke-width=".4"/><path d="M77.82 1.90V3.6" stroke="#808080" stroke-width=".4"/><path d="M79.28 1.90V3.6" stroke="#808080" stroke-width=".4"/><path d="M80.75 1.90V3.6" stroke="#808080" stroke-width=".4"/><path d="M82.21 1.90V3.6" stroke="#808080" stroke-width=".4"/><path d="M83.68 1.90V3.6" stroke="#808080" stroke-width=".4"/><path d="M85.14 1.90V3.6" stroke="#808080" stroke-width=".4"/><path d="M86.61 1.90V3.6" stroke="#808080" stroke-width=".4"/><path d="M88.07 1.90V3.6" stroke="#808080" stroke-width=".4"/><path d="M89.54 1.90V3.6" stroke="#808080" stroke-width=".4"/><path d="M91.00 0.20V3.6" stroke="#808080" stroke-width=".4"/><path d="M92.47 1.90V3.6" stroke="#808080" stroke-width=".4"/><path d="M93.93 1.90V3.6" stroke="#808080" stroke-width=".4"/><path d="M95.40 1.90V3.6" stroke="#808080" stroke-width=".4"/><path d="M96.86 1.90V3.6" stroke="#808080" stroke-width=".4"/><path d="M98.33 1.90V3.6" stroke="#808080" stroke-width=".4"/><path d="M99.79 1.90V3.6" stroke="#808080" stroke-width=".4"/><path d="M101.26 1.90V3.6" stroke="#808080" stroke-width=".4"/><path d="M102.72 1.90V3.6" stroke="#808080" stroke-width=".4"/><path d="M104.19 1.90V3.6" stroke="#808080" stroke-width=".4"/><path d="M105.65 1.90V3.6" stroke="#808080" stroke-width=".4"/><path d="M107.12 1.90V3.6" stroke="#808080" stroke-width=".4"/><path d="M108.58 1.90V3.6" stroke="#808080" stroke-width=".4"/><path d="M110.05 1.90V3.6" stroke="#808080" stroke-width=".4"/><path d="M111.51 1.90V3.6" stroke="#808080" stroke-width=".4"/><path d="M112.98 1.90V3.6" stroke="#808080" stroke-width=".4"/><path d="M114.44 1.90V3.6" stroke="#808080" stroke-width=".4"/><path d="M115.91 1.90V3.6" stroke="#808080" stroke-width=".4"/><path d="M117.37 1.90V3.6" stroke="#808080" stroke-width=".4"/><path d="M118.84 1.90V3.6" stroke="#808080" stroke-width=".4"/><path d="M120.30 0.20V3.6" stroke="#808080" stroke-width=".4"/><path d="M121.77 1.90V3.6" stroke="#808080" stroke-width=".4"/><path d="M123.23 1.90V3.6" stroke="#808080" stroke-width=".4"/><path d="M124.70 1.90V3.6" stroke="#808080" stroke-width=".4"/><path d="M126.16 1.90V3.6" stroke="#808080" stroke-width=".4"/><path d="M127.63 1.90V3.6" stroke="#808080" stroke-width=".4"/><path d="M129.09 1.90V3.6" stroke="#808080" stroke-width=".4"/><path d="M130.56 1.90V3.6" stroke="#808080" stroke-width=".4"/><path d="M132.02 1.90V3.6" stroke="#808080" stroke-width=".4"/><path d="M133.49 1.90V3.6" stroke="#808080" stroke-width=".4"/><path d="M134.95 1.90V3.6" stroke="#808080" stroke-width=".4"/><path d="M136.42 1.90V3.6" stroke="#808080" stroke-width=".4"/><path d="M137.88 1.90V3.6" stroke="#808080" stroke-width=".4"/><path d="M139.35 1.90V3.6" stroke="#808080" stroke-width=".4"/><path d="M140.81 1.90V3.6" stroke="#808080" stroke-width=".4"/><path d="M142.28 1.90V3.6" stroke="#808080" stroke-width=".4"/><path d="M143.74 1.90V3.6" stroke="#808080" stroke-width=".4"/><path d="M145.21 1.90V3.6" stroke="#808080" stroke-width=".4"/><path d="M146.67 1.90V3.6" stroke="#808080" stroke-width=".4"/><path d="M148.14 1.90V3.6" stroke="#808080" stroke-width=".4"/><path d="M149.60 0.20V3.6" stroke="#808080" stroke-width=".4"/><path d="M151.07 1.90V3.6" stroke="#808080" stroke-width=".4"/><path d="M152.53 1.90V3.6" stroke="#808080" stroke-width=".4"/><path d="M154.00 1.90V3.6" stroke="#808080" stroke-width=".4"/><path d="M155.46 1.90V3.6" stroke="#808080" stroke-width=".4"/><path d="M156.93 1.90V3.6" stroke="#808080" stroke-width=".4"/><path d="M158.39 1.90V3.6" stroke="#808080" stroke-width=".4"/><path d="M159.86 1.90V3.6" stroke="#808080" stroke-width=".4"/><path d="M161.32 1.90V3.6" stroke="#808080" stroke-width=".4"/><path d="M162.79 1.90V3.6" stroke="#808080" stroke-width=".4"/><path d="M164.25 1.90V3.6" stroke="#808080" stroke-width=".4"/><path d="M165.72 1.90V3.6" stroke="#808080" stroke-width=".4"/><path d="M167.18 1.90V3.6" stroke="#808080" stroke-width=".4"/><path d="M168.65 1.90V3.6" stroke="#808080" stroke-width=".4"/><path d="M170.11 1.90V3.6" stroke="#808080" stroke-width=".4"/><path d="M171.58 1.90V3.6" stroke="#808080" stroke-width=".4"/></svg>
</div>
<div style="left:358.4px;top:498.8px;width:342.8px;height:3.2px;background:#8e8820;"></div>
<div style="left:218px;top:501.2px;width:476.8px;height:1.2px;background:#141414;"></div>
<div style="left:218px;top:523.2px;width:476.8px;height:1.2px;background:#141414;"></div>
<div style="left:218px;top:550.8px;width:476.8px;height:1.2px;background:#141414;"></div>
<div style="left:218px;top:578.6px;width:476.8px;height:1.2px;background:#141414;"></div>
<div style="left:218px;top:640px;width:476.8px;height:1.2px;background:#141414;"></div>
<div style="left:218px;top:668.4px;width:476.8px;height:1.2px;background:#141414;"></div>
<div style="left:218px;top:696.8px;width:476.8px;height:1.2px;background:#141414;"></div>
<div style="left:218px;top:608px;width:476.8px;height:2.4px;background:#0e0e0e;"></div>
<div style="left:357.4px;top:478px;width:1.2px;height:238px;background:#151515;"></div>
<svg style="left:246.4px;top:531.4px;" width="7.2" height="9.2" viewBox="0 0 3.6 4.6"><rect x=".3" y="2" width="2.8" height="2.3" rx=".3" fill="#b8b8b8"/><path d="M.9 2V1.2A.85 .85 0 0 1 2.6 1.2" fill="none" stroke="#b8b8b8" stroke-width=".5"/></svg>
<span class="t" style="left:261.8px;top:532.05px;font-size:8.8px;color:#c4c4c4;transform:scaleX(0.855);">V3</span>
<svg style="left:278.8px;top:533.0px;" width="8.8" height="6.4" viewBox="0 0 4.4 3.2"><rect x=".3" y=".3" width="2.8" height="2.6" fill="none" stroke="#b8b8b8" stroke-width=".5"/><path d="M1.2 .3V2.9M2.1 .3V2.9" stroke="#b8b8b8" stroke-width=".35"/><path d="M3.1 .7A1 1 0 0 1 3.1 2.5" fill="none" stroke="#b8b8b8" stroke-width=".5"/></svg>
<svg style="left:295.4px;top:533.2px;" width="9.2" height="6" viewBox="0 0 4.6 3"><path d="M.3 1.5C1.2 .2 3.4 .2 4.3 1.5C3.4 2.8 1.2 2.8 .3 1.5Z" fill="none" stroke="#b8b8b8" stroke-width=".5"/><circle cx="2.3" cy="1.5" r=".6" fill="#b8b8b8"/></svg>
<svg style="left:246.4px;top:559.8px;" width="7.2" height="9.2" viewBox="0 0 3.6 4.6"><rect x=".3" y="2" width="2.8" height="2.3" rx=".3" fill="#b8b8b8"/><path d="M.9 2V1.2A.85 .85 0 0 1 2.6 1.2" fill="none" stroke="#b8b8b8" stroke-width=".5"/></svg>
<span class="t" style="left:261.8px;top:560.45px;font-size:8.8px;color:#c4c4c4;transform:scaleX(0.855);">V2</span>
<svg style="left:278.8px;top:561.4px;" width="8.8" height="6.4" viewBox="0 0 4.4 3.2"><rect x=".3" y=".3" width="2.8" height="2.6" fill="none" stroke="#b8b8b8" stroke-width=".5"/><path d="M1.2 .3V2.9M2.1 .3V2.9" stroke="#b8b8b8" stroke-width=".35"/><path d="M3.1 .7A1 1 0 0 1 3.1 2.5" fill="none" stroke="#b8b8b8" stroke-width=".5"/></svg>
<svg style="left:295.4px;top:561.6px;" width="9.2" height="6" viewBox="0 0 4.6 3"><path d="M.3 1.5C1.2 .2 3.4 .2 4.3 1.5C3.4 2.8 1.2 2.8 .3 1.5Z" fill="none" stroke="#b8b8b8" stroke-width=".5"/><circle cx="2.3" cy="1.5" r=".6" fill="#b8b8b8"/></svg>
<svg style="left:246.4px;top:588.4px;" width="7.2" height="9.2" viewBox="0 0 3.6 4.6"><rect x=".3" y="2" width="2.8" height="2.3" rx=".3" fill="#b8b8b8"/><path d="M.9 2V1.2A.85 .85 0 0 1 2.6 1.2" fill="none" stroke="#b8b8b8" stroke-width=".5"/></svg>
<span class="t" style="left:261.8px;top:589.05px;font-size:8.8px;color:#c4c4c4;transform:scaleX(0.855);">V1</span>
<svg style="left:278.8px;top:590.0px;" width="8.8" height="6.4" viewBox="0 0 4.4 3.2"><rect x=".3" y=".3" width="2.8" height="2.6" fill="none" stroke="#b8b8b8" stroke-width=".5"/><path d="M1.2 .3V2.9M2.1 .3V2.9" stroke="#b8b8b8" stroke-width=".35"/><path d="M3.1 .7A1 1 0 0 1 3.1 2.5" fill="none" stroke="#b8b8b8" stroke-width=".5"/></svg>
<svg style="left:295.4px;top:590.2px;" width="9.2" height="6" viewBox="0 0 4.6 3"><path d="M.3 1.5C1.2 .2 3.4 .2 4.3 1.5C3.4 2.8 1.2 2.8 .3 1.5Z" fill="none" stroke="#b8b8b8" stroke-width=".5"/><circle cx="2.3" cy="1.5" r=".6" fill="#b8b8b8"/></svg>
<div style="left:225.6px;top:579.8px;width:16.2px;height:27.0px;background:#1b6ad6;border-radius:1.1px;"></div>
<span class="t" style="left:229.2px;top:588.92px;font-size:9.2px;color:#f4f8ff;transform:scaleX(0.818);">V1</span>
<div style="left:258.4px;top:579.8px;width:16.2px;height:27.0px;background:#1b6ad6;border-radius:1.1px;"></div>
<span class="t" style="left:262.0px;top:588.92px;font-size:9.2px;color:#f4f8ff;transform:scaleX(0.818);">V1</span>
<svg style="left:246.4px;top:620.4px;" width="7.2" height="9.2" viewBox="0 0 3.6 4.6"><rect x=".3" y="2" width="2.8" height="2.3" rx=".3" fill="#b8b8b8"/><path d="M.9 2V1.2A.85 .85 0 0 1 2.6 1.2" fill="none" stroke="#b8b8b8" stroke-width=".5"/></svg>
<svg style="left:278.8px;top:622.0px;" width="8.8" height="6.4" viewBox="0 0 4.4 3.2"><rect x=".3" y=".3" width="2.8" height="2.6" fill="none" stroke="#b8b8b8" stroke-width=".5"/><path d="M1.2 .3V2.9M2.1 .3V2.9" stroke="#b8b8b8" stroke-width=".35"/><path d="M3.1 .7A1 1 0 0 1 3.1 2.5" fill="none" stroke="#b8b8b8" stroke-width=".5"/></svg>
<div style="left:258.4px;top:611.2px;width:16.2px;height:27.6px;background:#1b6ad6;border-radius:1.1px;"></div>
<span class="t" style="left:262.0px;top:620.62px;font-size:9.2px;color:#f4f8ff;transform:scaleX(0.818);">A1</span>
<span class="t" style="left:297.6px;top:621.72px;font-size:7.6px;color:#5e5e5e;transform:scaleX(0.948);">M</span>
<span class="t" style="left:315.0px;top:621.72px;font-size:7.6px;color:#5e5e5e;transform:scaleX(0.866);">S</span>
<svg style="left:329.4px;top:620.2px;" width="6" height="10" viewBox="0 0 3 5"><rect x=".8" y=".2" width="1.4" height="2.8" rx=".7" fill="#b8b8b8"/><path d="M.3 2.2A1.2 1.2 0 0 0 2.7 2.2M1.5 3.5V4.5M.8 4.6H2.2" fill="none" stroke="#b8b8b8" stroke-width=".4"/></svg>
<svg style="left:246.4px;top:648.6px;" width="7.2" height="9.2" viewBox="0 0 3.6 4.6"><rect x=".3" y="2" width="2.8" height="2.3" rx=".3" fill="#b8b8b8"/><path d="M.9 2V1.2A.85 .85 0 0 1 2.6 1.2" fill="none" stroke="#b8b8b8" stroke-width=".5"/></svg>
<svg style="left:278.8px;top:650.2px;" width="8.8" height="6.4" viewBox="0 0 4.4 3.2"><rect x=".3" y=".3" width="2.8" height="2.6" fill="none" stroke="#b8b8b8" stroke-width=".5"/><path d="M1.2 .3V2.9M2.1 .3V2.9" stroke="#b8b8b8" stroke-width=".35"/><path d="M3.1 .7A1 1 0 0 1 3.1 2.5" fill="none" stroke="#b8b8b8" stroke-width=".5"/></svg>
<div style="left:258.4px;top:641.2px;width:16.2px;height:26.2px;background:#1b6ad6;border-radius:1.1px;"></div>
<span class="t" style="left:262.0px;top:649.92px;font-size:9.2px;color:#f4f8ff;transform:scaleX(0.818);">A2</span>
<span class="t" style="left:297.6px;top:649.92px;font-size:7.6px;color:#5e5e5e;transform:scaleX(0.948);">M</span>
<span class="t" style="left:315.0px;top:649.92px;font-size:7.6px;color:#5e5e5e;transform:scaleX(0.866);">S</span>
<svg style="left:329.4px;top:648.4px;" width="6" height="10" viewBox="0 0 3 5"><rect x=".8" y=".2" width="1.4" height="2.8" rx=".7" fill="#b8b8b8"/><path d="M.3 2.2A1.2 1.2 0 0 0 2.7 2.2M1.5 3.5V4.5M.8 4.6H2.2" fill="none" stroke="#b8b8b8" stroke-width=".4"/></svg>
<svg style="left:246.4px;top:677.0px;" width="7.2" height="9.2" viewBox="0 0 3.6 4.6"><rect x=".3" y="2" width="2.8" height="2.3" rx=".3" fill="#b8b8b8"/><path d="M.9 2V1.2A.85 .85 0 0 1 2.6 1.2" fill="none" stroke="#b8b8b8" stroke-width=".5"/></svg>
<svg style="left:278.8px;top:678.6px;" width="8.8" height="6.4" viewBox="0 0 4.4 3.2"><rect x=".3" y=".3" width="2.8" height="2.6" fill="none" stroke="#b8b8b8" stroke-width=".5"/><path d="M1.2 .3V2.9M2.1 .3V2.9" stroke="#b8b8b8" stroke-width=".35"/><path d="M3.1 .7A1 1 0 0 1 3.1 2.5" fill="none" stroke="#b8b8b8" stroke-width=".5"/></svg>
<div style="left:258.4px;top:669.6px;width:16.2px;height:26.4px;background:#1b6ad6;border-radius:1.1px;"></div>
<span class="t" style="left:262.0px;top:678.42px;font-size:9.2px;color:#f4f8ff;transform:scaleX(0.818);">A3</span>
<span class="t" style="left:297.6px;top:678.32px;font-size:7.6px;color:#5e5e5e;transform:scaleX(0.948);">M</span>
<span class="t" style="left:315.0px;top:678.32px;font-size:7.6px;color:#5e5e5e;transform:scaleX(0.866);">S</span>
<svg style="left:329.4px;top:676.8px;" width="6" height="10" viewBox="0 0 3 5"><rect x=".8" y=".2" width="1.4" height="2.8" rx=".7" fill="#b8b8b8"/><path d="M.3 2.2A1.2 1.2 0 0 0 2.7 2.2M1.5 3.5V4.5M.8 4.6H2.2" fill="none" stroke="#b8b8b8" stroke-width=".4"/></svg>
<div style="left:225.6px;top:611.2px;width:16.2px;height:27.6px;background:#1b6ad6;border-radius:1.1px;"></div>
<span class="t" style="left:229.2px;top:620.62px;font-size:9.2px;color:#f4f8ff;transform:scaleX(0.818);">A1</span>
<svg style="left:246.4px;top:705.6px;" width="7.2" height="9.2" viewBox="0 0 3.6 4.6"><rect x=".3" y="2" width="2.8" height="2.3" rx=".3" fill="#b8b8b8"/><path d="M.9 2V1.2A.85 .85 0 0 1 2.6 1.2" fill="none" stroke="#b8b8b8" stroke-width=".5"/></svg>
<span class="t" style="left:260.8px;top:706.36px;font-size:8.6px;color:#c4c4c4;transform:scaleX(0.927);">Mix</span>
<span class="t" style="left:303.2px;top:706.36px;font-size:8.6px;color:#3d8be8;transform:scaleX(0.870);">0,0</span>
<svg style="left:346px;top:706.8px;" width="9.2" height="7.6" viewBox="0 0 4.6 3.8"><path d="M.4 .4L2.4 1.9L.4 3.4Z" fill="#b8b8b8"/><path d="M2.9 .3V3.5" stroke="#b8b8b8" stroke-width=".6"/><path d="M4.2 .4L3.2 1.9L4.2 3.4Z" fill="#b8b8b8" opacity="0"/></svg>
<div style="left:358.4px;top:579.4px;width:336.0px;height:28.2px;background:#0c5878;"></div>
<div style="left:385.2px;top:579.4px;width:1.0px;height:28.2px;background:#083e56;"></div>
<div style="left:525.4px;top:579.4px;width:1.2px;height:28.2px;background:#083e56;"></div>
<div style="left:358.4px;top:610.6px;width:336.0px;height:28.8px;background:#0c5878;"></div>
<div style="left:385.2px;top:610.6px;width:1.0px;height:28.8px;background:#083e56;"></div>
<div style="left:525.4px;top:610.6px;width:1.2px;height:28.8px;background:#083e56;"></div>
<div style="left:358.4px;top:623.8px;width:336.0px;height:3.8px;background:#2c7d9a;"></div>
<div style="left:358.4px;top:632.2px;width:336.0px;height:3.4px;background:#2c7d9a;"></div>
<div style="left:358.4px;top:629.8px;width:336.0px;height:1.0px;background:#1a6a88;"></div>
<span class="t" style="left:371.6px;top:581.45px;font-size:8.8px;color:#d8e6ee;font-style:italic;font-family:"Liberation Serif",serif;transform:scaleX(0.935);">fx</span>
<span class="t" style="left:511.6px;top:581.45px;font-size:8.8px;color:#d8e6ee;font-style:italic;font-family:"Liberation Serif",serif;transform:scaleX(0.935);">fx</span>
<span class="t" style="left:679.2px;top:581.45px;font-size:8.8px;color:#d8e6ee;font-style:italic;font-family:"Liberation Serif",serif;transform:scaleX(0.935);">fx</span>
<span class="t" style="left:371.6px;top:612.45px;font-size:8.8px;color:#3f86a2;font-style:italic;font-family:"Liberation Serif",serif;transform:scaleX(0.935);">fx</span>
<span class="t" style="left:512.4px;top:612.45px;font-size:8.8px;color:#3f86a2;font-style:italic;font-family:"Liberation Serif",serif;transform:scaleX(0.935);">fx</span>
<span class="t" style="left:679.2px;top:612.45px;font-size:8.8px;color:#3f86a2;font-style:italic;font-family:"Liberation Serif",serif;transform:scaleX(0.935);">fx</span>
<svg style="left:496px;top:614px;" width="8.8" height="6" viewBox="0 0 4.4 3"><path d="M1.9 .3L.3 1.5L1.9 2.7Z M2.5 .3L4.1 1.5L2.5 2.7Z" fill="#cfe0ea"/></svg>
<svg style="left:662.6px;top:614px;" width="8.8" height="6" viewBox="0 0 4.4 3"><path d="M1.9 .3L.3 1.5L1.9 2.7Z M2.5 .3L4.1 1.5L2.5 2.7Z" fill="#cfe0ea"/></svg>
<span class="t" style="left:391.6px;top:581.36px;font-size:8.6px;color:#e8f0f4;transform:scaleX(0.798);">FX30_SLog3_120fps.mp4 [V]</span>
<span class="t" style="left:532px;top:581.36px;font-size:8.6px;color:#e8f0f4;transform:scaleX(0.805);">FX30_SLog3_60fps_1.mp4 [V]</span>
<svg style="left:386.2px;top:579.4px;" width="3.2" height="3.2" viewBox="0 0 1.6 1.6"><path d="M0 0H1.4L0 1.4Z" fill="#e6eef2"/></svg>
<svg style="left:386.2px;top:610.6px;" width="3.2" height="3.2" viewBox="0 0 1.6 1.6"><path d="M0 0H1.4L0 1.4Z" fill="#e6eef2"/></svg>
<svg style="left:526.6px;top:579.4px;" width="3.2" height="3.2" viewBox="0 0 1.6 1.6"><path d="M0 0H1.4L0 1.4Z" fill="#e6eef2"/></svg>
<svg style="left:526.6px;top:610.6px;" width="3.2" height="3.2" viewBox="0 0 1.6 1.6"><path d="M0 0H1.4L0 1.4Z" fill="#e6eef2"/></svg>
<div style="left:386.6px;top:591.2px;width:30px;height:16px;background:#e4de28;"></div>
<svg style="left:386.6px;top:591.2px;" width="30" height="16" viewBox="0 0 15 8"><path d="M5.6 6.6C5.4 5.2 6 3.8 7.2 3.4C7 2.4 7.8 1.8 8.6 2.2C9.4 2.6 9.2 3.6 8.6 4C9.6 4.2 10.6 3.6 11 2.8L11.6 3.4C11 4.8 9.6 5.4 8.4 5.2L7.6 7Z" fill="#1a1a14"/><path d="M7.4 3.6L8.6 4.2L8 6L6.6 6.2Z" fill="#f4f4ee"/></svg>
<div style="left:527.0px;top:591.6px;width:25.2px;height:15.2px;background:#050404;"></div>
<svg style="left:527.0px;top:591.6px;" width="25.2" height="15.2" viewBox="0 0 12.6 7.6"><defs><filter id="tb"><feGaussianBlur stdDeviation=".35"/></filter></defs><ellipse cx="6.4" cy="3.6" rx="1.3" ry="1.9" fill="none" stroke="#ddd" stroke-width=".6" filter="url(#tb)"/><circle cx="6.3" cy="3.8" r=".6" fill="#fff" filter="url(#tb)"/></svg>
<div style="left:579.5px;top:492px;width:1.1px;height:224.8px;background:#2c70c4;"></div>
<svg style="left:575.6px;top:489.2px;" width="9.2" height="9.6" viewBox="0 0 4.6 4.8"><path d="M.3 .3H4.3V2.8L2.3 4.6L.3 2.8Z" fill="#3d8be8"/></svg>
<div style="left:696.8px;top:512px;width:6.8px;height:88px;background:#4a4a4a;border-radius:1.7px;"></div>
<div style="left:696.2px;top:508px;width:8px;height:8px;background:#1c1c1c;border-radius:50%;border:1.4px solid #e8e8e8;box-sizing:border-box;"></div>
<div style="left:696.2px;top:596px;width:8px;height:8px;background:#1c1c1c;border-radius:50%;border:1.4px solid #e8e8e8;box-sizing:border-box;"></div>
<div style="left:696.8px;top:617.6px;width:6.8px;height:88.4px;background:#4a4a4a;border-radius:1.7px;"></div>
<div style="left:696.2px;top:613.6px;width:8px;height:8px;background:#1c1c1c;border-radius:50%;border:1.4px solid #e8e8e8;box-sizing:border-box;"></div>
<div style="left:696.2px;top:702px;width:8px;height:8px;background:#1c1c1c;border-radius:50%;border:1.4px solid #e8e8e8;box-sizing:border-box;"></div>
<div style="left:224.4px;top:718.8px;width:476px;height:6.4px;background:#333;border-radius:1.6px;"></div>
<div style="left:259.2px;top:718.8px;width:105.2px;height:6.4px;background:#474747;"></div>
<div style="left:255.2px;top:718px;width:8px;height:8px;background:#1c1c1c;border-radius:50%;border:1.4px solid #e8e8e8;box-sizing:border-box;"></div>
<div style="left:360.4px;top:718px;width:8px;height:8px;background:#1c1c1c;border-radius:50%;border:1.4px solid #e8e8e8;box-sizing:border-box;"></div>
<div style="left:358.4px;top:704px;width:336px;height:1.2px;background:#d0d0d0;"></div>
<div style="left:727.6px;top:462px;width:23.0px;height:247.6px;background:#000;"></div>
<div style="left:738.6px;top:462px;width:1.2px;height:4.8px;background:#1e1e1e;"></div>
<div style="left:727.6px;top:466.6px;width:23.0px;height:0.8px;background:#3a3a3a;"></div>
<div style="left:727.6px;top:708.8px;width:10.6px;height:1.4px;background:#8f8f1e;"></div>
<div style="left:739.4px;top:708.8px;width:10.6px;height:1.4px;background:#8f8f1e;"></div>
<span class="t" style="left:759.6px;top:464.78px;font-size:8.2px;color:#c4c4c4;transform:scaleX(0.877);">0</span>
<div style="left:751.8px;top:468.4px;width:2.2px;height:0.8px;background:#6a6a6a;"></div>
<span class="t" style="left:757.2px;top:488.98px;font-size:8.2px;color:#c4c4c4;transform:scaleX(0.989);">-6</span>
<div style="left:751.8px;top:492.6px;width:2.2px;height:0.8px;background:#6a6a6a;"></div>
<span class="t" style="left:757.2px;top:513.18px;font-size:8.2px;color:#c4c4c4;transform:scaleX(0.878);">-12</span>
<div style="left:751.8px;top:516.8px;width:2.2px;height:0.8px;background:#6a6a6a;"></div>
<span class="t" style="left:757.2px;top:537.38px;font-size:8.2px;color:#c4c4c4;transform:scaleX(0.878);">-18</span>
<div style="left:751.8px;top:541.0px;width:2.2px;height:0.8px;background:#6a6a6a;"></div>
<span class="t" style="left:757.2px;top:561.58px;font-size:8.2px;color:#c4c4c4;transform:scaleX(0.878);">-24</span>
<div style="left:751.8px;top:565.2px;width:2.2px;height:0.8px;background:#6a6a6a;"></div>
<span class="t" style="left:757.2px;top:585.78px;font-size:8.2px;color:#c4c4c4;transform:scaleX(0.878);">-30</span>
<div style="left:751.8px;top:589.4px;width:2.2px;height:0.8px;background:#6a6a6a;"></div>
<span class="t" style="left:757.2px;top:609.98px;font-size:8.2px;color:#c4c4c4;transform:scaleX(0.878);">-36</span>
<div style="left:751.8px;top:613.6px;width:2.2px;height:0.8px;background:#6a6a6a;"></div>
<span class="t" style="left:757.2px;top:634.18px;font-size:8.2px;color:#c4c4c4;transform:scaleX(0.878);">-42</span>
<div style="left:751.8px;top:637.8px;width:2.2px;height:0.8px;background:#6a6a6a;"></div>
<span class="t" style="left:757.2px;top:658.38px;font-size:8.2px;color:#c4c4c4;transform:scaleX(0.878);">-48</span>
<div style="left:751.8px;top:662.0px;width:2.2px;height:0.8px;background:#6a6a6a;"></div>
<span class="t" style="left:757.2px;top:682.58px;font-size:8.2px;color:#c4c4c4;transform:scaleX(0.878);">-54</span>
<div style="left:751.8px;top:686.2px;width:2.2px;height:0.8px;background:#6a6a6a;"></div>
<span class="t" style="left:757.2px;top:704.38px;font-size:8.2px;color:#c4c4c4;transform:scaleX(0.879);">dB</span>
<div style="left:751.8px;top:708.0px;width:2.2px;height:0.8px;background:#6a6a6a;"></div>
<svg style="left:751.4px;top:463.2px;" width="2" height="248" viewBox="0 0 1 124"><path d="M0 2.80H.7" stroke="#4a4a4a" stroke-width=".3"/><path d="M0 5.83H.7" stroke="#4a4a4a" stroke-width=".3"/><path d="M0 8.85H.7" stroke="#4a4a4a" stroke-width=".3"/><path d="M0 11.88H.7" stroke="#4a4a4a" stroke-width=".3"/><path d="M0 14.90H.7" stroke="#4a4a4a" stroke-width=".3"/><path d="M0 17.92H.7" stroke="#4a4a4a" stroke-width=".3"/><path d="M0 20.95H.7" stroke="#4a4a4a" stroke-width=".3"/><path d="M0 23.97H.7" stroke="#4a4a4a" stroke-width=".3"/><path d="M0 27.00H.7" stroke="#4a4a4a" stroke-width=".3"/><path d="M0 30.03H.7" stroke="#4a4a4a" stroke-width=".3"/><path d="M0 33.05H.7" stroke="#4a4a4a" stroke-width=".3"/><path d="M0 36.08H.7" stroke="#4a4a4a" stroke-width=".3"/><path d="M0 39.10H.7" stroke="#4a4a4a" stroke-width=".3"/><path d="M0 42.13H.7" stroke="#4a4a4a" stroke-width=".3"/><path d="M0 45.15H.7" stroke="#4a4a4a" stroke-width=".3"/><path d="M0 48.17H.7" stroke="#4a4a4a" stroke-width=".3"/><path d="M0 51.20H.7" stroke="#4a4a4a" stroke-width=".3"/><path d="M0 54.22H.7" stroke="#4a4a4a" stroke-width=".3"/><path d="M0 57.25H.7" stroke="#4a4a4a" stroke-width=".3"/><path d="M0 60.28H.7" stroke="#4a4a4a" stroke-width=".3"/><path d="M0 63.30H.7" stroke="#4a4a4a" stroke-width=".3"/><path d="M0 66.33H.7" stroke="#4a4a4a" stroke-width=".3"/><path d="M0 69.35H.7" stroke="#4a4a4a" stroke-width=".3"/><path d="M0 72.38H.7" stroke="#4a4a4a" stroke-width=".3"/><path d="M0 75.40H.7" stroke="#4a4a4a" stroke-width=".3"/><path d="M0 78.42H.7" stroke="#4a4a4a" stroke-width=".3"/><path d="M0 81.45H.7" stroke="#4a4a4a" stroke-width=".3"/><path d="M0 84.47H.7" stroke="#4a4a4a" stroke-width=".3"/><path d="M0 87.50H.7" stroke="#4a4a4a" stroke-width=".3"/><path d="M0 90.53H.7" stroke="#4a4a4a" stroke-width=".3"/><path d="M0 93.55H.7" stroke="#4a4a4a" stroke-width=".3"/><path d="M0 96.58H.7" stroke="#4a4a4a" stroke-width=".3"/><path d="M0 99.60H.7" stroke="#4a4a4a" stroke-width=".3"/><path d="M0 102.63H.7" stroke="#4a4a4a" stroke-width=".3"/><path d="M0 105.65H.7" stroke="#4a4a4a" stroke-width=".3"/><path d="M0 108.67H.7" stroke="#4a4a4a" stroke-width=".3"/><path d="M0 111.70H.7" stroke="#4a4a4a" stroke-width=".3"/><path d="M0 114.72H.7" stroke="#4a4a4a" stroke-width=".3"/><path d="M0 117.75H.7" stroke="#4a4a4a" stroke-width=".3"/><path d="M0 120.78H.7" stroke="#4a4a4a" stroke-width=".3"/><path d="M0 123.80H.7" stroke="#4a4a4a" stroke-width=".3"/></svg>
<span class="t" style="left:730.6px;top:717.48px;font-size:6.6px;color:#909090;transform:scaleX(0.817);">S</span>
<span class="t" style="left:742.2px;top:717.48px;font-size:6.6px;color:#909090;transform:scaleX(0.817);">S</span>
</div></div></body></html>
